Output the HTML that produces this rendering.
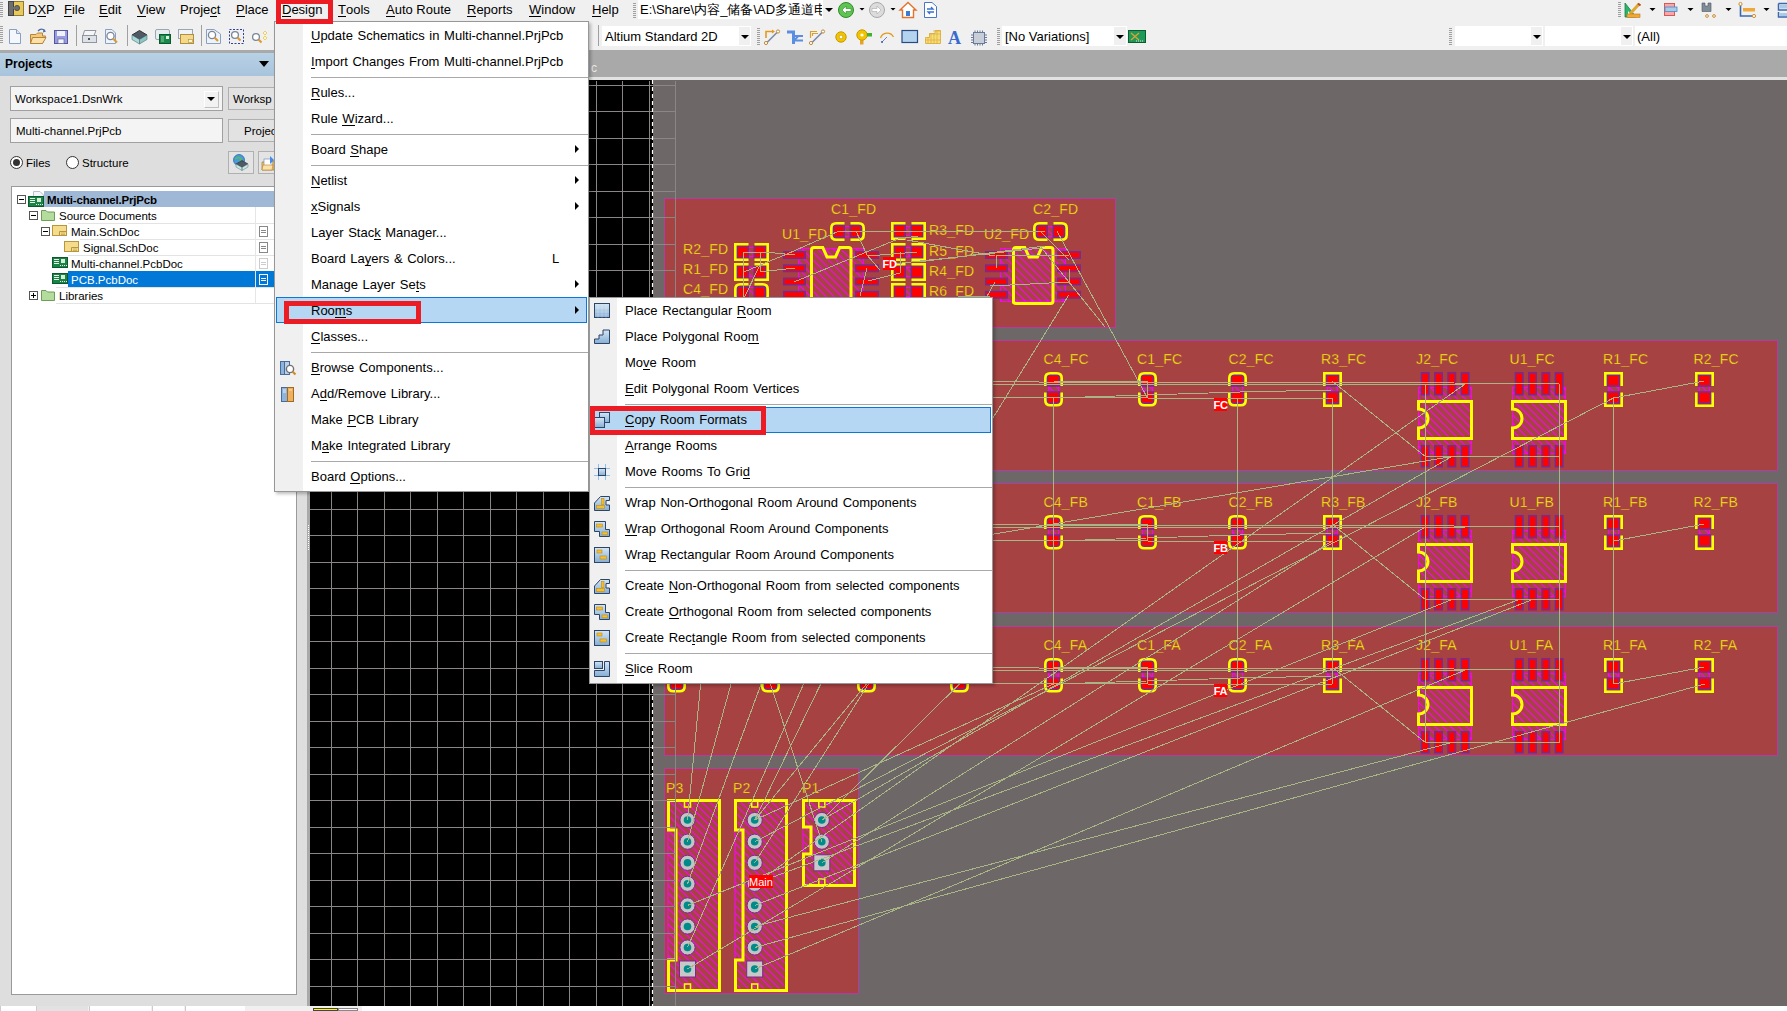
<!DOCTYPE html><html><head><meta charset="utf-8"><style>
*{margin:0;padding:0;box-sizing:border-box}
html,body{width:1787px;height:1011px;overflow:hidden;background:#f0f0f0;font-family:"Liberation Sans",sans-serif;font-size:13px;color:#000}
.a{position:absolute}
.t{position:absolute;white-space:nowrap;line-height:1}
u{text-decoration:none;border-bottom:1px solid #000;display:inline-block;line-height:0.92}
.menu{position:absolute;background:#fff;border:1px solid #979797;box-shadow:2px 2px 3px rgba(0,0,0,0.25)}
.gut{position:absolute;left:0;top:0;bottom:0;background:#f0f0f0}
.mi{position:absolute;left:0;right:0;height:26px}
.mi .l{position:absolute;top:6px;white-space:nowrap;line-height:1;word-spacing:1px}
.sep{position:absolute;height:1px;background:#a8a8a8}
.arr{position:absolute;width:0;height:0;border-top:4px solid transparent;border-bottom:4px solid transparent;border-left:4px solid #000}
.hl{position:absolute;background:#b5d7f3;border:1px solid #0a78d6}
.redbox{position:absolute;border:5px solid #ec1c24}
.combo{position:absolute;background:#fff}
.dd{position:absolute;width:0;height:0;border-left:4px solid transparent;border-right:4px solid transparent;border-top:4px solid #000}
</style></head><body>
<div class="a" style="left:0;top:0;width:1787px;height:24px;background:#f0f0f0"></div>
<div class="a" style="left:0;top:2px;width:3px;height:16px;background:repeating-linear-gradient(#a0a0a0 0 1px,transparent 1px 2px)"></div>
<div class="t" style="left:28px;top:3px">D<u>X</u>P</div>
<div class="t" style="left:64px;top:3px"><u>F</u>ile</div>
<div class="t" style="left:99px;top:3px"><u>E</u>dit</div>
<div class="t" style="left:137px;top:3px"><u>V</u>iew</div>
<div class="t" style="left:180px;top:3px">Proje<u>c</u>t</div>
<div class="t" style="left:236px;top:3px"><u>P</u>lace</div>
<div class="t" style="left:282px;top:3px"><u>D</u>esign</div>
<div class="t" style="left:338px;top:3px"><u>T</u>ools</div>
<div class="t" style="left:386px;top:3px"><u>A</u>uto Route</div>
<div class="t" style="left:467px;top:3px"><u>R</u>eports</div>
<div class="t" style="left:529px;top:3px"><u>W</u>indow</div>
<div class="t" style="left:592px;top:3px"><u>H</u>elp</div>
<div class="a" style="left:633px;top:3px;width:3px;height:16px;background:repeating-linear-gradient(#a0a0a0 0 1px,transparent 1px 2px)"></div>
<div class="combo" style="left:638px;top:0;width:196px;height:19px"></div>
<div class="t" style="left:640px;top:1px;font-size:13px;width:182px;height:18px;line-height:18px;overflow:hidden">E:\Share\内容_储备\AD多通道电路</div>
<div class="a" style="left:823px;top:0;width:11px;height:19px;background:#f0f0f0"></div>
<div class="dd" style="left:825px;top:8px"></div>
<div class="a" style="left:0;top:26px;width:3px;height:18px;background:repeating-linear-gradient(#a0a0a0 0 1px,transparent 1px 2px)"></div>
<div class="a" style="left:76px;top:25px;width:1px;height:21px;background:#a0a0a0"></div>
<div class="a" style="left:127px;top:25px;width:1px;height:21px;background:#a0a0a0"></div>
<div class="a" style="left:201px;top:25px;width:1px;height:21px;background:#a0a0a0"></div>
<div class="a" style="left:598px;top:25px;width:1px;height:21px;background:#a0a0a0"></div>
<div class="combo" style="left:602px;top:26px;width:149px;height:20px"></div>
<div class="t" style="left:605px;top:30px">Altium Standard 2D</div>
<div class="a" style="left:739px;top:27px;width:11px;height:18px;background:#f0f0f0"></div>
<div class="dd" style="left:741px;top:35px"></div>
<div class="a" style="left:757px;top:28px;width:3px;height:18px;background:repeating-linear-gradient(#a0a0a0 0 1px,transparent 1px 2px)"></div>
<div class="a" style="left:997px;top:28px;width:3px;height:18px;background:repeating-linear-gradient(#a0a0a0 0 1px,transparent 1px 2px)"></div>
<div class="combo" style="left:1002px;top:26px;width:125px;height:20px"></div>
<div class="t" style="left:1005px;top:30px">[No Variations]</div>
<div class="a" style="left:1114px;top:27px;width:12px;height:18px;background:#f0f0f0"></div>
<div class="dd" style="left:1116px;top:35px"></div>
<div class="a" style="left:1449px;top:28px;width:3px;height:18px;background:repeating-linear-gradient(#a0a0a0 0 1px,transparent 1px 2px)"></div>
<div class="combo" style="left:1455px;top:26px;width:88px;height:20px"></div>
<div class="a" style="left:1531px;top:27px;width:11px;height:18px;background:#f0f0f0"></div>
<div class="dd" style="left:1533px;top:35px"></div>
<div class="combo" style="left:1545px;top:26px;width:88px;height:20px"></div>
<div class="a" style="left:1621px;top:27px;width:11px;height:18px;background:#f0f0f0"></div>
<div class="dd" style="left:1623px;top:35px"></div>
<div class="combo" style="left:1635px;top:26px;width:152px;height:20px"></div>
<div class="t" style="left:1637px;top:30px">(All)</div>
<svg class="a" style="left:0;top:0" width="1787" height="50" viewBox="0 0 1787 50"><rect x="8.5" y="1.5" width="15" height="14" fill="#e8c95a" stroke="#8f7a35"/><rect x="8.5" y="1.5" width="5" height="14" fill="#6e6e6e" stroke="#444"/><circle cx="17" cy="8" r="2.6" fill="#6e6e6e" stroke="#444" stroke-width="0.8"/><rect x="13" y="7" width="3" height="2" fill="#6e6e6e"/><path d="M9.5,29.5 H16.5 L20.5,33.5 V43.5 H9.5 Z" fill="#f4f8fc" stroke="#8aa0c0"/><path d="M16.5,29.5 V33.5 H20.5" fill="#dde6f0" stroke="#8aa0c0"/><path d="M30.5,34.5 H36 L37.5,33 H42.5 V36 H45.5 L42.5,43.5 H30.5 Z" fill="#f4c97c" stroke="#b5853a"/><path d="M32.5,37.5 H46 L42.5,43.5 H30.5 Z" fill="#fbe0a8" stroke="#b5853a"/><path d="M38,31 Q41,27.5 45,30.5" fill="none" stroke="#4a6aa8" stroke-width="1.3"/><path d="M43.5,29 L46,31.5 L43,32.5 Z" fill="#4a6aa8"/><rect x="54.5" y="30.5" width="13" height="13" fill="#9a9ce0" stroke="#55579e"/><rect x="57" y="31" width="8" height="5" fill="#eef0fb"/><rect x="58" y="39" width="6" height="4.5" fill="#f4f4f4" stroke="#55579e" stroke-width="0.6"/><path d="M84.5,30.5 H96 L94,35.5 H83 Z" fill="#f6f6f6" stroke="#8f96a0"/><rect x="82.5" y="35.5" width="14" height="7" fill="#dde1e8" stroke="#8f96a0"/><rect x="88" y="38" width="2" height="2" fill="#555"/><path d="M105.5,29.5 H112 L115.5,33 V43.5 H105.5 Z" fill="#eef3fa" stroke="#8aa0c0"/><circle cx="110.5" cy="36" r="3.6" fill="#fff" stroke="#7b8595" stroke-width="1.3"/><path d="M113,38.5 L117,42.5" stroke="#d99a3a" stroke-width="2.2"/><path d="M132,35 L139.5,30.5 L147,35 L139.5,39.5 Z" fill="#4f5a66" stroke="#333"/><path d="M132,35 V39.5 L139.5,44 V39.5 Z" fill="#a8d8d8" stroke="#4a7070" stroke-width="0.6"/><path d="M147,35 V39.5 L139.5,44 V39.5 Z" fill="#8cc4c4" stroke="#4a7070" stroke-width="0.6"/><rect x="155.5" y="29.5" width="14" height="10" rx="1.5" fill="#e8edf2" stroke="#9aa6b2"/><rect x="159.5" y="34.5" width="11" height="9" fill="#17894a" stroke="#0b5a2e"/><rect x="166" y="36" width="3" height="3" fill="#e0f0e0"/><path d="M161,37 H164 M161,39 H164 M161,41 H164" stroke="#cfe8cf" stroke-width="0.7"/><rect x="178.5" y="29.5" width="14" height="9" fill="#f0f3f7" stroke="#9aa6b2"/><rect x="180.5" y="34.5" width="13" height="9" fill="#f4d98a" stroke="#b09040"/><rect x="188.5" y="39.5" width="4" height="3" fill="#fff3c8" stroke="#b09040" stroke-width="0.6"/><path d="M206.5,29.5 H214 L220.5,34 V43.5 H206.5 Z" fill="#eef3fa" stroke="#8aa0c0"/><circle cx="212" cy="35" r="3.6" fill="#fff" stroke="#7b8595" stroke-width="1.3"/><path d="M214.5,37.5 L218,41" stroke="#d99a3a" stroke-width="2.2"/><rect x="229.5" y="29.5" width="14" height="14" fill="none" stroke="#2c3f9a" stroke-dasharray="2,1.5"/><circle cx="235" cy="35" r="3.4" fill="#fff" stroke="#7b8595" stroke-width="1.3"/><path d="M237.5,37.5 L240.5,40.5" stroke="#d99a3a" stroke-width="2.2"/><circle cx="256" cy="37" r="3.4" fill="#fff" stroke="#7b8595" stroke-width="1.3"/><path d="M258.5,39.5 L261.5,42.5" stroke="#d99a3a" stroke-width="2.2"/><path d="M265,31 L267,33 L265,35 L263,33 Z M265,36 L267,38 L265,40 L263,38 Z" fill="#fff8c0" stroke="#e0c040" stroke-width="0.7"/><path d="M766,38 V31.5 H773" fill="none" stroke="#e39a1c" stroke-width="1.6"/><path d="M772,29.5 L775,31.5 L772,33.5 Z" fill="#e39a1c"/><path d="M766.5,43 L777.5,32" stroke="#7a8aa8" stroke-width="1.6"/><circle cx="766" cy="43" r="1.6" fill="#fff" stroke="#c08a3a" stroke-width="1"/><circle cx="778" cy="31.5" r="1.6" fill="#fff" stroke="#c08a3a" stroke-width="1"/><path d="M787,30.5 H795 V44 H792 V33.5 H787 Z" fill="#5a8ee0"/><path d="M795,36 H803 M795,39.5 L798,36.5 M795,40.5 H803" stroke="#5a8ee0" stroke-width="1.8" fill="none"/><path d="M810.5,38 V31.5 H817 M812.5,36 V33.5 H818" fill="none" stroke="#d9a030" stroke-width="1.2"/><path d="M811.5,43 L822.5,32" stroke="#7a8aa8" stroke-width="1.6"/><circle cx="811" cy="43" r="1.6" fill="#fff" stroke="#c08a3a"/><circle cx="823" cy="31.5" r="1.6" fill="#fff" stroke="#c08a3a"/><circle cx="841" cy="37" r="5.2" fill="#f2c400" stroke="#c89a00"/><circle cx="841" cy="37" r="1.8" fill="#fff" stroke="#aa8800" stroke-width="0.5"/><rect x="860" y="38" width="3.5" height="6.5" fill="#e8a030"/><circle cx="862" cy="35" r="5.2" fill="#f2c400" stroke="#c89a00"/><circle cx="862" cy="35" r="1.6" fill="#fff"/><rect x="867" y="33" width="5" height="3.5" fill="#44b030"/><path d="M880.5,38 A7,7 0 0 1 893.5,37" fill="none" stroke="#e39a1c" stroke-width="1.3"/><path d="M882,42 L887,37" stroke="#6a88c8" stroke-width="1"/><circle cx="882" cy="42" r="1" fill="#3a58a8"/><rect x="902" y="30.5" width="15.5" height="12" fill="#b4d3ef" stroke="#2a4a80" stroke-width="1.2"/><path d="M925.5,43.5 V37.5 H929.5 V33.5 H935 V30.5 H940.5 V43.5 Z" fill="#f7dc7a" stroke="#d8a830" stroke-width="0.8"/><path d="M925,40 H941 M928,37 V44 M931,34 V44 M934,34 V44 M937,31 V44 M929,34 H941 M933,31 H941" stroke="#d8a830" stroke-width="0.6"/><text x="948" y="44" font-family="Liberation Serif" font-weight="bold" font-size="18" fill="#3a6ad0">A</text><rect x="973.5" y="32.5" width="11" height="11" fill="#c8ced8" stroke="#6a7a9a"/><path d="M975,30.5 V32 M977.5,30.5 V32 M980,30.5 V32 M982.5,30.5 V32 M975,44 V45.5 M977.5,44 V45.5 M980,44 V45.5 M982.5,44 V45.5 M971,35 H973 M971,37.5 H973 M971,40 H973 M971,42.5 H973 M985,35 H987 M985,37.5 H987 M985,40 H987 M985,42.5 H987" stroke="#6a7a9a" stroke-width="1"/><rect x="1128.5" y="30.5" width="17" height="12" fill="#1d9a5a" stroke="#0d5a30"/><path d="M1131,33 L1139,40 M1139,33 L1131,40" stroke="#e0a030" stroke-width="1.3"/><path d="M1136,41 H1144" stroke="#e0f0e0" stroke-width="1" stroke-dasharray="1,1"/><circle cx="846" cy="10" r="7.5" fill="#5ec552" stroke="#2e8a2a"/><path d="M842,10 L846,6 V8.5 H851 V11.5 H846 V14 Z" fill="#fff" stroke="#2e8a2a" stroke-width="0.6"/><circle cx="877" cy="10" r="7.5" fill="#dcdcdc" stroke="#a8a8a8"/><path d="M881,10 L877,6 V8.5 H872 V11.5 H877 V14 Z" fill="#fff" stroke="#a8a8a8" stroke-width="0.6"/><path d="M900,10 L908,2.5 L916,10 H913.5 V17.5 H902.5 V10 Z" fill="#fff" stroke="#e2742e" stroke-width="1.4"/><rect x="906" y="11" width="4" height="5" fill="#3a7bd5"/><path d="M924.5,2.5 H932 L936.5,6.5 V17.5 H924.5 Z" fill="#fff" stroke="#4a78c0"/><path d="M927,9 H933 L931,7 M934,12 H928 L930,14" fill="none" stroke="#3a6fd0" stroke-width="1.3"/><path d="M1618,2.5 H1621 M1618,4.5 H1621 M1618,6.5 H1621 M1618,8.5 H1621 M1618,10.5 H1621 M1618,12.5 H1621 M1618,14.5 H1621 M1618,16.5 H1621" stroke="#a0a0a0" stroke-width="1"/><path d="M1625,3 V17 H1636 Z" fill="#2db36a" stroke="#16804a" stroke-width="0.8"/><path d="M1628,11 V14 H1631 Z" fill="#f0f0f0"/><path d="M1630,14 L1639,4" stroke="#e0a830" stroke-width="3"/><path d="M1638,3.5 L1640.5,5.5" stroke="#b05020" stroke-width="2"/><rect x="1627" y="14" width="13" height="3.5" fill="#f0a838" stroke="#c07818" stroke-width="0.6"/><rect x="1664.5" y="3.5" width="10" height="12" fill="#f8a8a8" stroke="#d85858"/><rect x="1665" y="7" width="12" height="4.5" fill="#a8cce8" stroke="#4a88c8" stroke-width="0.8"/><path d="M1702,3 H1705 V6 H1708 V3 H1711 V11.5 H1702 Z" fill="#7f8c98" stroke="#4a5560" stroke-width="0.6"/><circle cx="1707" cy="16" r="1.4" fill="none" stroke="#d09030"/><circle cx="1714" cy="16" r="1.4" fill="none" stroke="#d09030"/><path d="M1740.5,4 V16 H1754" fill="none" stroke="#3a68b0" stroke-width="1.6"/><circle cx="1740.5" cy="4" r="1.6" fill="#fff" stroke="#d09030"/><circle cx="1754" cy="16" r="1.6" fill="#fff" stroke="#d09030"/><rect x="1743" y="8" width="12" height="3.5" fill="#f0a838"/><path d="M1778.5,3.5 H1787 M1778.5,3.5 V10 H1787 M1778.5,12 V17 H1787" fill="none" stroke="#3a68b0" stroke-width="1.5"/><rect x="1780" y="5" width="7" height="3.5" fill="#a8cce8"/><rect x="1780" y="13" width="7" height="3" fill="#a8cce8"/><path d="M1649.5,8 H1655.5 L1652.5,11 Z" fill="#000"/><path d="M1687.5,8 H1693.5 L1690.5,11 Z" fill="#000"/><path d="M1725.5,8 H1731.5 L1728.5,11 Z" fill="#000"/><path d="M1763.5,8 H1769.5 L1766.5,11 Z" fill="#000"/><path d="M859.5,8 H864.5 L862,10.5 Z M890.5,8 H895.5 L893,10.5 Z" fill="#000"/></svg>
<div class="a" style="left:0;top:50px;width:310px;height:3px;background:#a9a9a9"></div>
<div class="a" style="left:0;top:53px;width:307px;height:953px;background:#dedede"></div>
<div class="a" style="left:0;top:53px;width:307px;height:23px;background:linear-gradient(#b7d1e6,#a8c4dc)"></div>
<div class="t" style="left:5px;top:58px;font-weight:bold;font-size:12px">Projects</div>
<div class="a" style="left:259px;top:61px;width:0;height:0;border-left:5px solid transparent;border-right:5px solid transparent;border-top:6px solid #000"></div>
<div class="a" style="left:307px;top:50px;width:3px;height:961px;background:#a9a9a9"></div>
<div class="a" style="left:308px;top:525px;width:1px;height:26px;background:repeating-linear-gradient(#fff 0 1px,transparent 1px 2px)"></div>
<div class="a" style="left:10px;top:86px;width:213px;height:25px;background:#f4f4f4;border:1px solid #a0a0a0"></div>
<div class="t" style="left:15px;top:94px;font-size:11.5px">Workspace1.DsnWrk</div>
<div class="a" style="left:204px;top:91px;width:15px;height:17px;background:#f2f2f2;border:1px solid;border-color:#fff #c0c0c0 #c0c0c0 #fff"></div>
<div class="dd" style="left:207px;top:97px"></div>
<div class="a" style="left:228px;top:87px;width:60px;height:23px;background:#e2e2e2;border:1px solid #b0b0b0"></div>
<div class="t" style="left:233px;top:94px;font-size:11.5px">Worksp</div>
<div class="a" style="left:10px;top:118px;width:213px;height:25px;background:#f4f4f4;border:1px solid #a0a0a0"></div>
<div class="t" style="left:16px;top:126px;font-size:11.5px">Multi-channel.PrjPcb</div>
<div class="a" style="left:228px;top:119px;width:60px;height:23px;background:#e2e2e2;border:1px solid #b0b0b0"></div>
<div class="t" style="left:244px;top:126px;font-size:11.5px">Projec</div>
<div class="a" style="left:10px;top:156px;width:13px;height:13px;border-radius:50%;background:#fff;border:1px solid #333"></div>
<div class="a" style="left:13px;top:159px;width:7px;height:7px;border-radius:50%;background:#333"></div>
<div class="t" style="left:26px;top:158px;font-size:11.5px">Files</div>
<div class="a" style="left:66px;top:156px;width:13px;height:13px;border-radius:50%;background:#fff;border:1px solid #333"></div>
<div class="t" style="left:82px;top:158px;font-size:11.5px">Structure</div>
<div class="a" style="left:228px;top:151px;width:26px;height:23px;background:#e4e4e4;border:1px solid #b0b0b0"></div>
<svg class="a" style="left:232px;top:154px" width="18" height="18" viewBox="0 0 18 18"><circle cx="7" cy="6" r="5.5" fill="#4a9ae0" stroke="#2a6ab0" stroke-width="0.8"/><path d="M3,5 Q6,2 9,5 Q7,8 10,9" fill="none" stroke="#5cc040" stroke-width="1.6"/><path d="M4,10 L10,6.5 L16,10 L10,13.5 Z" fill="#505a66" stroke="#2a2a2a" stroke-width="0.6"/><path d="M4,10 V13 L10,16.5 V13.5 Z M16,10 V13 L10,16.5 V13.5 Z" fill="#c8e8e8" stroke="#5a7a7a" stroke-width="0.5"/></svg>
<div class="a" style="left:258px;top:151px;width:26px;height:23px;background:#e4e4e4;border:1px solid #b0b0b0"></div>
<svg class="a" style="left:261px;top:154px" width="13" height="18" viewBox="0 0 13 18"><path d="M1,8 H6 L7,7 H13 V16 H1 Z" fill="#f3c77a" stroke="#b08030" stroke-width="0.8"/><rect x="3" y="5" width="8" height="7" fill="#fff" stroke="#6080b0" stroke-width="0.6"/><path d="M9,2 L13,6 L9,10 Z" fill="#4a8ae8"/><path d="M2,11 H12 L11,16 H1 Z" fill="#fbe0a8" stroke="#b08030" stroke-width="0.6"/></svg>
<div class="a" style="left:11px;top:186px;width:286px;height:809px;background:#fff;border:1px solid #9a9a9a"></div>
<div class="a" style="left:44px;top:191px;width:252px;height:16px;background:#9fb8d5"></div>
<div class="t" style="left:47px;top:195px;font-size:11.5px;font-weight:bold;color:#000;letter-spacing:-0.2px">Multi-channel.PrjPcb</div>
<div class="t" style="left:59px;top:211px;font-size:11.5px;font-weight:normal;color:#000;letter-spacing:0">Source Documents</div>
<div class="a" style="left:68px;top:223px;width:228px;height:1px;background:#e3e3e3"></div>
<div class="t" style="left:71px;top:227px;font-size:11.5px;font-weight:normal;color:#000;letter-spacing:0">Main.SchDoc</div>
<div class="a" style="left:80px;top:239px;width:216px;height:1px;background:#e3e3e3"></div>
<div class="t" style="left:83px;top:243px;font-size:11.5px;font-weight:normal;color:#000;letter-spacing:0">Signal.SchDoc</div>
<div class="a" style="left:68px;top:255px;width:228px;height:1px;background:#e3e3e3"></div>
<div class="t" style="left:71px;top:259px;font-size:11.5px;font-weight:normal;color:#000;letter-spacing:0">Multi-channel.PcbDoc</div>
<div class="a" style="left:68px;top:271px;width:228px;height:16px;background:#0078d7"></div>
<div class="t" style="left:71px;top:275px;font-size:11.5px;font-weight:normal;color:#fff;letter-spacing:0">PCB.PcbDoc</div>
<div class="a" style="left:56px;top:287px;width:240px;height:1px;background:#e3e3e3"></div>
<div class="a" style="left:56px;top:303px;width:240px;height:1px;background:#e3e3e3"></div>
<div class="t" style="left:59px;top:291px;font-size:11.5px;font-weight:normal;color:#000;letter-spacing:0">Libraries</div>
<div class="a" style="left:255px;top:207px;width:1px;height:96px;background:#e6e6e6"></div>
<div class="a" style="left:17px;top:195px;width:9px;height:9px;border:1px solid #555;background:#fff"></div>
<div class="a" style="left:19px;top:199px;width:5px;height:1px;background:#000"></div>
<div class="a" style="left:29px;top:211px;width:9px;height:9px;border:1px solid #555;background:#fff"></div>
<div class="a" style="left:31px;top:215px;width:5px;height:1px;background:#000"></div>
<div class="a" style="left:41px;top:227px;width:9px;height:9px;border:1px solid #555;background:#fff"></div>
<div class="a" style="left:43px;top:231px;width:5px;height:1px;background:#000"></div>
<div class="a" style="left:29px;top:291px;width:9px;height:9px;border:1px solid #555;background:#fff"></div>
<div class="a" style="left:31px;top:295px;width:5px;height:1px;background:#000"></div>
<div class="a" style="left:33px;top:293px;width:1px;height:5px;background:#000"></div>
<svg class="a" style="left:0;top:0" width="310" height="310" viewBox="0 0 310 310"><path d="M33.5,191.5 H40 L43.5,195 V204.5 H33.5 Z" fill="#f4f6fa" stroke="#b8c0cc"/><rect x="28.5" y="196.5" width="15" height="10" fill="#1a8448" stroke="#0c5a2c"/><path d="M30,198.5 H35 M30,200.5 H35 M30,202.5 H35" stroke="#e8f4e8" stroke-width="1"/><rect x="37" y="198" width="4" height="4" fill="#d8ecd8"/><path d="M36,204.5 h1 M38,204.5 h1 M40,204.5 h1 M42,204.5 h1" stroke="#e8f4e8" stroke-width="1"/><path d="M41.5,220.5 V210.5 H46 L47.5,212 H54.5 V220.5 Z" fill="#b4dc9c" stroke="#6f9a58"/><rect x="52.5" y="225.5" width="14" height="10" fill="#f5dc8c" stroke="#b8963c"/><path d="M59.5,235.5 V231.5 H66.5" fill="none" stroke="#b8963c"/><path d="M61,233 H65 M61,234.5 H65" stroke="#c8a850" stroke-width="0.8"/><rect x="64.5" y="241.5" width="14" height="10" fill="#f5dc8c" stroke="#b8963c"/><path d="M71.5,251.5 V247.5 H78.5" fill="none" stroke="#b8963c"/><path d="M73,249 H77 M73,250.5 H77" stroke="#c8a850" stroke-width="0.8"/><rect x="52.5" y="257.5" width="15" height="10" fill="#1a8448" stroke="#0c5a2c"/><path d="M54,259.5 H59 M54,261.5 H59 M54,263.5 H59" stroke="#e8f4e8" stroke-width="1"/><rect x="61" y="259" width="4" height="4" fill="#d8ecd8"/><path d="M60,265.5 h1 M62,265.5 h1 M64,265.5 h1 M66,265.5 h1" stroke="#e8f4e8" stroke-width="1"/><rect x="52.5" y="273.5" width="15" height="10" fill="#1a8448" stroke="#0c5a2c"/><path d="M54,275.5 H59 M54,277.5 H59 M54,279.5 H59" stroke="#e8f4e8" stroke-width="1"/><rect x="61" y="275" width="4" height="4" fill="#d8ecd8"/><path d="M60,281.5 h1 M62,281.5 h1 M64,281.5 h1 M66,281.5 h1" stroke="#e8f4e8" stroke-width="1"/><path d="M41.5,300.5 V290.5 H46 L47.5,292 H54.5 V300.5 Z" fill="#b4dc9c" stroke="#6f9a58"/></svg>
<div class="a" style="left:259px;top:226px;width:9px;height:11px;border:1px solid #888"></div>
<div class="a" style="left:261px;top:230px;width:5px;height:4px;background:repeating-linear-gradient(#888 0 1px,transparent 1px 2px)"></div>
<div class="a" style="left:259px;top:242px;width:9px;height:11px;border:1px solid #888"></div>
<div class="a" style="left:261px;top:246px;width:5px;height:4px;background:repeating-linear-gradient(#888 0 1px,transparent 1px 2px)"></div>
<div class="a" style="left:259px;top:258px;width:9px;height:11px;border:1px solid #ccc"></div>
<div class="a" style="left:261px;top:262px;width:5px;height:4px;background:repeating-linear-gradient(#ccc 0 1px,transparent 1px 2px)"></div>
<div class="a" style="left:259px;top:274px;width:9px;height:11px;border:1px solid #fff"></div>
<div class="a" style="left:261px;top:278px;width:5px;height:4px;background:repeating-linear-gradient(#fff 0 1px,transparent 1px 2px)"></div>
<div class="a" style="left:310px;top:50px;width:1477px;height:27px;background:#a9a9a9"></div>
<div class="a" style="left:310px;top:77px;width:1477px;height:3px;background:#e2e2e2"></div>
<div class="t" style="left:591px;top:62px;font-size:12px;color:#e8e8e8">c</div>
<div class="a" style="left:0;top:1006px;width:1787px;height:5px;background:#f0f0f0"></div>
<div class="a" style="left:0px;top:1006px;width:36px;height:5px;background:#fff;border-left:1px solid #ccc"></div>
<div class="a" style="left:36px;top:1006px;width:52px;height:5px;background:#e2e2e2;border-left:1px solid #ccc"></div>
<div class="a" style="left:89px;top:1006px;width:62px;height:5px;background:#fff;border-left:1px solid #ccc"></div>
<div class="a" style="left:152px;top:1006px;width:32px;height:5px;background:#fff;border-left:1px solid #ccc"></div>
<div class="a" style="left:185px;top:1006px;width:60px;height:5px;background:#fff;border-left:1px solid #ccc"></div>
<div class="a" style="left:313px;top:1008px;width:25px;height:3px;background:#ff0;border:1px solid #444"></div>
<div class="a" style="left:338px;top:1008px;width:20px;height:3px;background:#fff;border:1px solid #888"></div>
<div class="a" style="left:362px;top:1006px;width:1425px;height:5px;background:#fff"></div>
<svg class="a" style="left:0;top:0" width="1787" height="1011" viewBox="0 0 1787 1011"><rect x="310" y="80" width="1477" height="926" fill="#6d6867"/><rect x="310" y="80" width="343" height="926" fill="#000"/><rect x="664.5" y="198.5" width="451" height="129" fill="#a74242" stroke="#b23ca6" stroke-width="1"/><rect x="664.5" y="340.5" width="1113" height="130" fill="#a74242" stroke="#b23ca6" stroke-width="1"/><rect x="664.5" y="483.5" width="1113" height="129" fill="#a74242" stroke="#b23ca6" stroke-width="1"/><rect x="664.5" y="626.5" width="1113" height="129" fill="#a74242" stroke="#b23ca6" stroke-width="1"/><rect x="664.5" y="768.5" width="194" height="225" fill="#a74242" stroke="#b23ca6" stroke-width="1"/><defs><pattern id="hatch" patternUnits="userSpaceOnUse" width="5.5" height="5.5" patternTransform="rotate(-45)"><line x1="0.5" y1="0" x2="0.5" y2="5.5" stroke="#ff00ff" stroke-width="1"/></pattern></defs><text x="683" y="253.5" fill="#ffff00" stroke="#a74242" stroke-width="0.35" font-family="Liberation Sans" font-size="14" letter-spacing="0.2">R2_FD</text><text x="683" y="274" fill="#ffff00" stroke="#a74242" stroke-width="0.35" font-family="Liberation Sans" font-size="14" letter-spacing="0.2">R1_FD</text><text x="683" y="294" fill="#ffff00" stroke="#a74242" stroke-width="0.35" font-family="Liberation Sans" font-size="14" letter-spacing="0.2">C4_FD</text><rect x="747.5" y="247.5" width="7" height="9" fill="url(#hatch)" stroke="#ff00ff" stroke-width="1"/><rect x="737.1999999999999" y="246.20000000000002" width="11.000000000000023" height="11.600000000000017" fill="#ff0000" stroke="#7b2a8c" stroke-width="1.6"/><rect x="754.3" y="246.20000000000002" width="11.4" height="11.600000000000017" fill="#ff0000" stroke="#7b2a8c" stroke-width="1.6"/><path d="M748.5,244.3 H735.3 V259.7 H748.5 M754.5,244.3 H767.7 V259.7 H754.5" fill="none" stroke="#ffff00" stroke-width="2.6"/><rect x="747.5" y="267.5" width="7" height="9" fill="url(#hatch)" stroke="#ff00ff" stroke-width="1"/><rect x="737.1999999999999" y="266.2" width="11.000000000000023" height="11.600000000000046" fill="#ff0000" stroke="#7b2a8c" stroke-width="1.6"/><rect x="754.3" y="266.2" width="11.4" height="11.600000000000046" fill="#ff0000" stroke="#7b2a8c" stroke-width="1.6"/><path d="M748.5,264.3 H735.3 V279.7 H748.5 M754.5,264.3 H767.7 V279.7 H754.5" fill="none" stroke="#ffff00" stroke-width="2.6"/><rect x="747.5" y="287.5" width="7" height="10" fill="url(#hatch)" stroke="#ff00ff" stroke-width="1"/><rect x="737.8" y="286.8" width="10.4" height="11.4" fill="#ff0000" stroke="#7b2a8c" stroke-width="1.6"/><rect x="754.3" y="286.8" width="10.9" height="11.4" fill="#ff0000" stroke="#7b2a8c" stroke-width="1.6"/><path d="M748.5,284.3 H740.3 Q735.3,284.3 735.3,289.3 V295.7 Q735.3,300.7 740.3,300.7 H748.5 M754.5,284.3 H762.7 Q767.7,284.3 767.7,289.3 V295.7 Q767.7,300.7 762.7,300.7 H754.5" fill="none" stroke="#ffff00" stroke-width="2.6"/><rect x="798.5" y="248.5" width="65" height="53" fill="url(#hatch)" stroke="#ff00ff" stroke-width="1"/><rect x="783.8" y="251.8" width="21.4" height="6.4" fill="#ff0000" stroke="#7b2a8c" stroke-width="1.6"/><rect x="855.8" y="251.8" width="22.4" height="6.4" fill="#ff0000" stroke="#7b2a8c" stroke-width="1.6"/><rect x="783.8" y="265.05" width="21.4" height="6.4" fill="#ff0000" stroke="#7b2a8c" stroke-width="1.6"/><rect x="855.8" y="265.05" width="22.4" height="6.4" fill="#ff0000" stroke="#7b2a8c" stroke-width="1.6"/><rect x="783.8" y="278.3" width="21.4" height="6.4" fill="#ff0000" stroke="#7b2a8c" stroke-width="1.6"/><rect x="855.8" y="278.3" width="22.4" height="6.4" fill="#ff0000" stroke="#7b2a8c" stroke-width="1.6"/><rect x="783.8" y="291.55" width="21.4" height="6.4" fill="#ff0000" stroke="#7b2a8c" stroke-width="1.6"/><rect x="855.8" y="291.55" width="22.4" height="6.4" fill="#ff0000" stroke="#7b2a8c" stroke-width="1.6"/><path d="M811.5,303.5 V250 Q811.5,247.5 814.0,247.5 H822.75 L827.05,257 H835.45 L839.75,247.5 H848.5 Q851,247.5 851,250 V301 Q851,303.5 848.5,303.5 H814.0 Q811.5,303.5 811.5,301 Z" fill="none" stroke="#ffff00" stroke-width="3"/><rect x="843.5" y="226.5" width="7" height="10" fill="url(#hatch)" stroke="#ff00ff" stroke-width="1"/><rect x="833.8" y="225.8" width="10.4" height="11.4" fill="#ff0000" stroke="#7b2a8c" stroke-width="1.6"/><rect x="850.3" y="225.8" width="10.9" height="11.4" fill="#ff0000" stroke="#7b2a8c" stroke-width="1.6"/><path d="M844.5,223.3 H836.3 Q831.3,223.3 831.3,228.3 V234.7 Q831.3,239.7 836.3,239.7 H844.5 M850.5,223.3 H858.7 Q863.7,223.3 863.7,228.3 V234.7 Q863.7,239.7 858.7,239.7 H850.5" fill="none" stroke="#ffff00" stroke-width="2.6"/><text x="831" y="214" fill="#ffff00" stroke="#a74242" stroke-width="0.35" font-family="Liberation Sans" font-size="14" letter-spacing="0.2">C1_FD</text><text x="782" y="239" fill="#ffff00" stroke="#a74242" stroke-width="0.35" font-family="Liberation Sans" font-size="14" letter-spacing="0.2">U1_FD</text><rect x="904.5" y="226.5" width="7" height="9" fill="url(#hatch)" stroke="#ff00ff" stroke-width="1"/><rect x="894.1999999999999" y="225.20000000000002" width="11.000000000000023" height="11.599999999999989" fill="#ff0000" stroke="#7b2a8c" stroke-width="1.6"/><rect x="911.3" y="225.20000000000002" width="11.4" height="11.599999999999989" fill="#ff0000" stroke="#7b2a8c" stroke-width="1.6"/><path d="M905.5,223.3 H892.3 V238.7 H905.5 M911.5,223.3 H924.7 V238.7 H911.5" fill="none" stroke="#ffff00" stroke-width="2.6"/><rect x="904.5" y="247.5" width="7" height="9" fill="url(#hatch)" stroke="#ff00ff" stroke-width="1"/><rect x="894.1999999999999" y="246.20000000000002" width="11.000000000000023" height="11.600000000000017" fill="#ff0000" stroke="#7b2a8c" stroke-width="1.6"/><rect x="911.3" y="246.20000000000002" width="11.4" height="11.600000000000017" fill="#ff0000" stroke="#7b2a8c" stroke-width="1.6"/><path d="M905.5,244.3 H892.3 V259.7 H905.5 M911.5,244.3 H924.7 V259.7 H911.5" fill="none" stroke="#ffff00" stroke-width="2.6"/><rect x="904.5" y="267.5" width="7" height="9" fill="url(#hatch)" stroke="#ff00ff" stroke-width="1"/><rect x="894.1999999999999" y="266.2" width="11.000000000000023" height="11.600000000000046" fill="#ff0000" stroke="#7b2a8c" stroke-width="1.6"/><rect x="911.3" y="266.2" width="11.4" height="11.600000000000046" fill="#ff0000" stroke="#7b2a8c" stroke-width="1.6"/><path d="M905.5,264.3 H892.3 V279.7 H905.5 M911.5,264.3 H924.7 V279.7 H911.5" fill="none" stroke="#ffff00" stroke-width="2.6"/><rect x="904.5" y="287.5" width="7" height="9" fill="url(#hatch)" stroke="#ff00ff" stroke-width="1"/><rect x="894.1999999999999" y="286.2" width="11.000000000000023" height="11.600000000000046" fill="#ff0000" stroke="#7b2a8c" stroke-width="1.6"/><rect x="911.3" y="286.2" width="11.4" height="11.600000000000046" fill="#ff0000" stroke="#7b2a8c" stroke-width="1.6"/><path d="M905.5,284.3 H892.3 V299.7 H905.5 M911.5,284.3 H924.7 V299.7 H911.5" fill="none" stroke="#ffff00" stroke-width="2.6"/><text x="929" y="235" fill="#ffff00" stroke="#a74242" stroke-width="0.35" font-family="Liberation Sans" font-size="14" letter-spacing="0.2">R3_FD</text><text x="929" y="255.5" fill="#ffff00" stroke="#a74242" stroke-width="0.35" font-family="Liberation Sans" font-size="14" letter-spacing="0.2">R5_FD</text><text x="929" y="276" fill="#ffff00" stroke="#a74242" stroke-width="0.35" font-family="Liberation Sans" font-size="14" letter-spacing="0.2">R4_FD</text><text x="929" y="296" fill="#ffff00" stroke="#a74242" stroke-width="0.35" font-family="Liberation Sans" font-size="14" letter-spacing="0.2">R6_FD</text><rect x="1000.5" y="248.5" width="65" height="53" fill="url(#hatch)" stroke="#ff00ff" stroke-width="1"/><rect x="985.8" y="251.8" width="21.4" height="6.4" fill="#ff0000" stroke="#7b2a8c" stroke-width="1.6"/><rect x="1057.8" y="251.8" width="22.4" height="6.4" fill="#ff0000" stroke="#7b2a8c" stroke-width="1.6"/><rect x="985.8" y="265.05" width="21.4" height="6.4" fill="#ff0000" stroke="#7b2a8c" stroke-width="1.6"/><rect x="1057.8" y="265.05" width="22.4" height="6.4" fill="#ff0000" stroke="#7b2a8c" stroke-width="1.6"/><rect x="985.8" y="278.3" width="21.4" height="6.4" fill="#ff0000" stroke="#7b2a8c" stroke-width="1.6"/><rect x="1057.8" y="278.3" width="22.4" height="6.4" fill="#ff0000" stroke="#7b2a8c" stroke-width="1.6"/><rect x="985.8" y="291.55" width="21.4" height="6.4" fill="#ff0000" stroke="#7b2a8c" stroke-width="1.6"/><rect x="1057.8" y="291.55" width="22.4" height="6.4" fill="#ff0000" stroke="#7b2a8c" stroke-width="1.6"/><path d="M1013.5,303.5 V250 Q1013.5,247.5 1016.0,247.5 H1024.75 L1029.05,257 H1037.45 L1041.75,247.5 H1050.5 Q1053,247.5 1053,250 V301 Q1053,303.5 1050.5,303.5 H1016.0 Q1013.5,303.5 1013.5,301 Z" fill="none" stroke="#ffff00" stroke-width="3"/><rect x="1046.5" y="226.5" width="7" height="10" fill="url(#hatch)" stroke="#ff00ff" stroke-width="1"/><rect x="1036.8" y="225.8" width="10.4" height="11.4" fill="#ff0000" stroke="#7b2a8c" stroke-width="1.6"/><rect x="1053.3" y="225.8" width="10.9" height="11.4" fill="#ff0000" stroke="#7b2a8c" stroke-width="1.6"/><path d="M1047.5,223.3 H1039.3 Q1034.3,223.3 1034.3,228.3 V234.7 Q1034.3,239.7 1039.3,239.7 H1047.5 M1053.5,223.3 H1061.7 Q1066.7,223.3 1066.7,228.3 V234.7 Q1066.7,239.7 1061.7,239.7 H1053.5" fill="none" stroke="#ffff00" stroke-width="2.6"/><text x="984" y="239" fill="#ffff00" stroke="#a74242" stroke-width="0.35" font-family="Liberation Sans" font-size="14" letter-spacing="0.2">U2_FD</text><text x="1033" y="214" fill="#ffff00" stroke="#a74242" stroke-width="0.35" font-family="Liberation Sans" font-size="14" letter-spacing="0.2">C2_FD</text><rect x="671.5" y="385.5" width="10" height="6" fill="url(#hatch)" stroke="#ff00ff" stroke-width="1"/><rect x="670.5" y="375.2" width="11.99999999999991" height="10.800000000000034" fill="#ff0000" stroke="#7b2a8c" stroke-width="1.6"/><rect x="670.5" y="392.0" width="11.99999999999991" height="11.099999999999989" fill="#ff0000" stroke="#7b2a8c" stroke-width="1.6"/><path d="M668.3,386 V378.3 Q668.3,373.3 673.3,373.3 H679.7 Q684.7,373.3 684.7,378.3 V386 M668.3,392.5 V400.2 Q668.3,405.2 673.3,405.2 H679.7 Q684.7,405.2 684.7,400.2 V392.5" fill="none" stroke="#ffff00" stroke-width="2.6"/><rect x="765.5" y="385.5" width="10" height="6" fill="url(#hatch)" stroke="#ff00ff" stroke-width="1"/><rect x="764.5" y="375.2" width="11.99999999999991" height="10.800000000000034" fill="#ff0000" stroke="#7b2a8c" stroke-width="1.6"/><rect x="764.5" y="392.0" width="11.99999999999991" height="11.099999999999989" fill="#ff0000" stroke="#7b2a8c" stroke-width="1.6"/><path d="M762.3,386 V378.3 Q762.3,373.3 767.3,373.3 H773.7 Q778.7,373.3 778.7,378.3 V386 M762.3,392.5 V400.2 Q762.3,405.2 767.3,405.2 H773.7 Q778.7,405.2 778.7,400.2 V392.5" fill="none" stroke="#ffff00" stroke-width="2.6"/><rect x="861.5" y="385.5" width="10" height="6" fill="url(#hatch)" stroke="#ff00ff" stroke-width="1"/><rect x="860.5" y="375.2" width="11.99999999999991" height="10.800000000000034" fill="#ff0000" stroke="#7b2a8c" stroke-width="1.6"/><rect x="860.5" y="392.0" width="11.99999999999991" height="11.099999999999989" fill="#ff0000" stroke="#7b2a8c" stroke-width="1.6"/><path d="M858.3,386 V378.3 Q858.3,373.3 863.3,373.3 H869.7 Q874.7,373.3 874.7,378.3 V386 M858.3,392.5 V400.2 Q858.3,405.2 863.3,405.2 H869.7 Q874.7,405.2 874.7,400.2 V392.5" fill="none" stroke="#ffff00" stroke-width="2.6"/><rect x="954.5" y="385.5" width="10" height="6" fill="url(#hatch)" stroke="#ff00ff" stroke-width="1"/><rect x="953.5" y="375.2" width="11.99999999999991" height="10.800000000000034" fill="#ff0000" stroke="#7b2a8c" stroke-width="1.6"/><rect x="953.5" y="392.0" width="11.99999999999991" height="11.099999999999989" fill="#ff0000" stroke="#7b2a8c" stroke-width="1.6"/><path d="M951.3,386 V378.3 Q951.3,373.3 956.3,373.3 H962.7 Q967.7,373.3 967.7,378.3 V386 M951.3,392.5 V400.2 Q951.3,405.2 956.3,405.2 H962.7 Q967.7,405.2 967.7,400.2 V392.5" fill="none" stroke="#ffff00" stroke-width="2.6"/><rect x="1048.5" y="385.5" width="10" height="6" fill="url(#hatch)" stroke="#ff00ff" stroke-width="1"/><rect x="1047.5" y="375.2" width="11.99999999999991" height="10.800000000000034" fill="#ff0000" stroke="#7b2a8c" stroke-width="1.6"/><rect x="1047.5" y="392.0" width="11.99999999999991" height="11.099999999999989" fill="#ff0000" stroke="#7b2a8c" stroke-width="1.6"/><path d="M1045.3,386 V378.3 Q1045.3,373.3 1050.3,373.3 H1056.7 Q1061.7,373.3 1061.7,378.3 V386 M1045.3,392.5 V400.2 Q1045.3,405.2 1050.3,405.2 H1056.7 Q1061.7,405.2 1061.7,400.2 V392.5" fill="none" stroke="#ffff00" stroke-width="2.6"/><rect x="1142.5" y="385.5" width="10" height="6" fill="url(#hatch)" stroke="#ff00ff" stroke-width="1"/><rect x="1141.5" y="375.2" width="11.99999999999991" height="10.800000000000034" fill="#ff0000" stroke="#7b2a8c" stroke-width="1.6"/><rect x="1141.5" y="392.0" width="11.99999999999991" height="11.099999999999989" fill="#ff0000" stroke="#7b2a8c" stroke-width="1.6"/><path d="M1139.3,386 V378.3 Q1139.3,373.3 1144.3,373.3 H1150.7 Q1155.7,373.3 1155.7,378.3 V386 M1139.3,392.5 V400.2 Q1139.3,405.2 1144.3,405.2 H1150.7 Q1155.7,405.2 1155.7,400.2 V392.5" fill="none" stroke="#ffff00" stroke-width="2.6"/><rect x="1232.5" y="385.5" width="10" height="6" fill="url(#hatch)" stroke="#ff00ff" stroke-width="1"/><rect x="1231.5" y="375.2" width="11.99999999999991" height="10.800000000000034" fill="#ff0000" stroke="#7b2a8c" stroke-width="1.6"/><rect x="1231.5" y="392.0" width="11.99999999999991" height="11.099999999999989" fill="#ff0000" stroke="#7b2a8c" stroke-width="1.6"/><path d="M1229.3,386 V378.3 Q1229.3,373.3 1234.3,373.3 H1240.7 Q1245.7,373.3 1245.7,378.3 V386 M1229.3,392.5 V400.2 Q1229.3,405.2 1234.3,405.2 H1240.7 Q1245.7,405.2 1245.7,400.2 V392.5" fill="none" stroke="#ffff00" stroke-width="2.6"/><rect x="1327.5" y="385.5" width="10" height="6" fill="url(#hatch)" stroke="#ff00ff" stroke-width="1"/><rect x="1326.5" y="375.2" width="11.799999999999864" height="10.800000000000034" fill="#ff0000" stroke="#7b2a8c" stroke-width="1.6"/><rect x="1326.5" y="392.0" width="11.799999999999864" height="11.099999999999989" fill="#ff0000" stroke="#7b2a8c" stroke-width="1.6"/><path d="M1324.3,386 V373.3 H1340.7 V386 M1324.3,392.5 V405.7 H1340.7 V392.5" fill="none" stroke="#ffff00" stroke-width="2.6"/><rect x="1418.5" y="387.5" width="53" height="66" fill="url(#hatch)" stroke="#ff00ff" stroke-width="1"/><rect x="1421.5" y="372.8" width="7.4" height="21.9" fill="#ff0000" stroke="#7b2a8c" stroke-width="1.6"/><rect x="1421.5" y="445.8" width="7.4" height="20.9" fill="#ff0000" stroke="#7b2a8c" stroke-width="1.6"/><rect x="1434.8" y="372.8" width="7.4" height="21.9" fill="#ff0000" stroke="#7b2a8c" stroke-width="1.6"/><rect x="1434.8" y="445.8" width="7.4" height="20.9" fill="#ff0000" stroke="#7b2a8c" stroke-width="1.6"/><rect x="1448.1" y="372.8" width="7.4" height="21.9" fill="#ff0000" stroke="#7b2a8c" stroke-width="1.6"/><rect x="1448.1" y="445.8" width="7.4" height="20.9" fill="#ff0000" stroke="#7b2a8c" stroke-width="1.6"/><rect x="1461.4" y="372.8" width="7.4" height="21.9" fill="#ff0000" stroke="#7b2a8c" stroke-width="1.6"/><rect x="1461.4" y="445.8" width="7.4" height="20.9" fill="#ff0000" stroke="#7b2a8c" stroke-width="1.6"/><path d="M1418.5,401.5 H1471.5 V438.5 H1418.5 V428 A9,9 0 0 0 1418.5,409 Z" fill="none" stroke="#ffff00" stroke-width="3"/><rect x="1512.5" y="387.5" width="53" height="66" fill="url(#hatch)" stroke="#ff00ff" stroke-width="1"/><rect x="1515.5" y="372.8" width="7.4" height="21.9" fill="#ff0000" stroke="#7b2a8c" stroke-width="1.6"/><rect x="1515.5" y="445.8" width="7.4" height="20.9" fill="#ff0000" stroke="#7b2a8c" stroke-width="1.6"/><rect x="1528.8" y="372.8" width="7.4" height="21.9" fill="#ff0000" stroke="#7b2a8c" stroke-width="1.6"/><rect x="1528.8" y="445.8" width="7.4" height="20.9" fill="#ff0000" stroke="#7b2a8c" stroke-width="1.6"/><rect x="1542.1" y="372.8" width="7.4" height="21.9" fill="#ff0000" stroke="#7b2a8c" stroke-width="1.6"/><rect x="1542.1" y="445.8" width="7.4" height="20.9" fill="#ff0000" stroke="#7b2a8c" stroke-width="1.6"/><rect x="1555.4" y="372.8" width="7.4" height="21.9" fill="#ff0000" stroke="#7b2a8c" stroke-width="1.6"/><rect x="1555.4" y="445.8" width="7.4" height="20.9" fill="#ff0000" stroke="#7b2a8c" stroke-width="1.6"/><path d="M1512.5,401.5 H1565.5 V438.5 H1512.5 V428 A9,9 0 0 0 1512.5,409 Z" fill="none" stroke="#ffff00" stroke-width="3"/><rect x="1608.5" y="385.5" width="10" height="6" fill="url(#hatch)" stroke="#ff00ff" stroke-width="1"/><rect x="1607.5" y="375.2" width="11.799999999999864" height="10.800000000000034" fill="#ff0000" stroke="#7b2a8c" stroke-width="1.6"/><rect x="1607.5" y="392.0" width="11.799999999999864" height="11.099999999999989" fill="#ff0000" stroke="#7b2a8c" stroke-width="1.6"/><path d="M1605.3,386 V373.3 H1621.7 V386 M1605.3,392.5 V405.7 H1621.7 V392.5" fill="none" stroke="#ffff00" stroke-width="2.6"/><rect x="1699.5" y="385.5" width="10" height="6" fill="url(#hatch)" stroke="#ff00ff" stroke-width="1"/><rect x="1698.5" y="375.2" width="11.799999999999864" height="10.800000000000034" fill="#ff0000" stroke="#7b2a8c" stroke-width="1.6"/><rect x="1698.5" y="392.0" width="11.799999999999864" height="11.099999999999989" fill="#ff0000" stroke="#7b2a8c" stroke-width="1.6"/><path d="M1696.3,386 V373.3 H1712.7 V386 M1696.3,392.5 V405.7 H1712.7 V392.5" fill="none" stroke="#ffff00" stroke-width="2.6"/><text x="1043.5" y="364" fill="#ffff00" stroke="#a74242" stroke-width="0.35" font-family="Liberation Sans" font-size="14" letter-spacing="0.2">C4_FC</text><text x="1137" y="364" fill="#ffff00" stroke="#a74242" stroke-width="0.35" font-family="Liberation Sans" font-size="14" letter-spacing="0.2">C1_FC</text><text x="1228.5" y="364" fill="#ffff00" stroke="#a74242" stroke-width="0.35" font-family="Liberation Sans" font-size="14" letter-spacing="0.2">C2_FC</text><text x="1321" y="364" fill="#ffff00" stroke="#a74242" stroke-width="0.35" font-family="Liberation Sans" font-size="14" letter-spacing="0.2">R3_FC</text><text x="1416" y="364" fill="#ffff00" stroke="#a74242" stroke-width="0.35" font-family="Liberation Sans" font-size="14" letter-spacing="0.2">J2_FC</text><text x="1509.5" y="364" fill="#ffff00" stroke="#a74242" stroke-width="0.35" font-family="Liberation Sans" font-size="14" letter-spacing="0.2">U1_FC</text><text x="1603" y="364" fill="#ffff00" stroke="#a74242" stroke-width="0.35" font-family="Liberation Sans" font-size="14" letter-spacing="0.2">R1_FC</text><text x="1693.5" y="364" fill="#ffff00" stroke="#a74242" stroke-width="0.35" font-family="Liberation Sans" font-size="14" letter-spacing="0.2">R2_FC</text><rect x="671.5" y="528.5" width="10" height="6" fill="url(#hatch)" stroke="#ff00ff" stroke-width="1"/><rect x="670.5" y="518.1999999999999" width="11.99999999999991" height="10.799999999999978" fill="#ff0000" stroke="#7b2a8c" stroke-width="1.6"/><rect x="670.5" y="535.0" width="11.99999999999991" height="11.099999999999932" fill="#ff0000" stroke="#7b2a8c" stroke-width="1.6"/><path d="M668.3,529 V521.3 Q668.3,516.3 673.3,516.3 H679.7 Q684.7,516.3 684.7,521.3 V529 M668.3,535.5 V543.2 Q668.3,548.2 673.3,548.2 H679.7 Q684.7,548.2 684.7,543.2 V535.5" fill="none" stroke="#ffff00" stroke-width="2.6"/><rect x="765.5" y="528.5" width="10" height="6" fill="url(#hatch)" stroke="#ff00ff" stroke-width="1"/><rect x="764.5" y="518.1999999999999" width="11.99999999999991" height="10.799999999999978" fill="#ff0000" stroke="#7b2a8c" stroke-width="1.6"/><rect x="764.5" y="535.0" width="11.99999999999991" height="11.099999999999932" fill="#ff0000" stroke="#7b2a8c" stroke-width="1.6"/><path d="M762.3,529 V521.3 Q762.3,516.3 767.3,516.3 H773.7 Q778.7,516.3 778.7,521.3 V529 M762.3,535.5 V543.2 Q762.3,548.2 767.3,548.2 H773.7 Q778.7,548.2 778.7,543.2 V535.5" fill="none" stroke="#ffff00" stroke-width="2.6"/><rect x="861.5" y="528.5" width="10" height="6" fill="url(#hatch)" stroke="#ff00ff" stroke-width="1"/><rect x="860.5" y="518.1999999999999" width="11.99999999999991" height="10.799999999999978" fill="#ff0000" stroke="#7b2a8c" stroke-width="1.6"/><rect x="860.5" y="535.0" width="11.99999999999991" height="11.099999999999932" fill="#ff0000" stroke="#7b2a8c" stroke-width="1.6"/><path d="M858.3,529 V521.3 Q858.3,516.3 863.3,516.3 H869.7 Q874.7,516.3 874.7,521.3 V529 M858.3,535.5 V543.2 Q858.3,548.2 863.3,548.2 H869.7 Q874.7,548.2 874.7,543.2 V535.5" fill="none" stroke="#ffff00" stroke-width="2.6"/><rect x="954.5" y="528.5" width="10" height="6" fill="url(#hatch)" stroke="#ff00ff" stroke-width="1"/><rect x="953.5" y="518.1999999999999" width="11.99999999999991" height="10.799999999999978" fill="#ff0000" stroke="#7b2a8c" stroke-width="1.6"/><rect x="953.5" y="535.0" width="11.99999999999991" height="11.099999999999932" fill="#ff0000" stroke="#7b2a8c" stroke-width="1.6"/><path d="M951.3,529 V521.3 Q951.3,516.3 956.3,516.3 H962.7 Q967.7,516.3 967.7,521.3 V529 M951.3,535.5 V543.2 Q951.3,548.2 956.3,548.2 H962.7 Q967.7,548.2 967.7,543.2 V535.5" fill="none" stroke="#ffff00" stroke-width="2.6"/><rect x="1048.5" y="528.5" width="10" height="6" fill="url(#hatch)" stroke="#ff00ff" stroke-width="1"/><rect x="1047.5" y="518.1999999999999" width="11.99999999999991" height="10.799999999999978" fill="#ff0000" stroke="#7b2a8c" stroke-width="1.6"/><rect x="1047.5" y="535.0" width="11.99999999999991" height="11.099999999999932" fill="#ff0000" stroke="#7b2a8c" stroke-width="1.6"/><path d="M1045.3,529 V521.3 Q1045.3,516.3 1050.3,516.3 H1056.7 Q1061.7,516.3 1061.7,521.3 V529 M1045.3,535.5 V543.2 Q1045.3,548.2 1050.3,548.2 H1056.7 Q1061.7,548.2 1061.7,543.2 V535.5" fill="none" stroke="#ffff00" stroke-width="2.6"/><rect x="1142.5" y="528.5" width="10" height="6" fill="url(#hatch)" stroke="#ff00ff" stroke-width="1"/><rect x="1141.5" y="518.1999999999999" width="11.99999999999991" height="10.799999999999978" fill="#ff0000" stroke="#7b2a8c" stroke-width="1.6"/><rect x="1141.5" y="535.0" width="11.99999999999991" height="11.099999999999932" fill="#ff0000" stroke="#7b2a8c" stroke-width="1.6"/><path d="M1139.3,529 V521.3 Q1139.3,516.3 1144.3,516.3 H1150.7 Q1155.7,516.3 1155.7,521.3 V529 M1139.3,535.5 V543.2 Q1139.3,548.2 1144.3,548.2 H1150.7 Q1155.7,548.2 1155.7,543.2 V535.5" fill="none" stroke="#ffff00" stroke-width="2.6"/><rect x="1232.5" y="528.5" width="10" height="6" fill="url(#hatch)" stroke="#ff00ff" stroke-width="1"/><rect x="1231.5" y="518.1999999999999" width="11.99999999999991" height="10.799999999999978" fill="#ff0000" stroke="#7b2a8c" stroke-width="1.6"/><rect x="1231.5" y="535.0" width="11.99999999999991" height="11.099999999999932" fill="#ff0000" stroke="#7b2a8c" stroke-width="1.6"/><path d="M1229.3,529 V521.3 Q1229.3,516.3 1234.3,516.3 H1240.7 Q1245.7,516.3 1245.7,521.3 V529 M1229.3,535.5 V543.2 Q1229.3,548.2 1234.3,548.2 H1240.7 Q1245.7,548.2 1245.7,543.2 V535.5" fill="none" stroke="#ffff00" stroke-width="2.6"/><rect x="1327.5" y="528.5" width="10" height="6" fill="url(#hatch)" stroke="#ff00ff" stroke-width="1"/><rect x="1326.5" y="518.1999999999999" width="11.799999999999864" height="10.799999999999978" fill="#ff0000" stroke="#7b2a8c" stroke-width="1.6"/><rect x="1326.5" y="535.0" width="11.799999999999864" height="11.099999999999932" fill="#ff0000" stroke="#7b2a8c" stroke-width="1.6"/><path d="M1324.3,529 V516.3 H1340.7 V529 M1324.3,535.5 V548.7 H1340.7 V535.5" fill="none" stroke="#ffff00" stroke-width="2.6"/><rect x="1418.5" y="530.5" width="53" height="66" fill="url(#hatch)" stroke="#ff00ff" stroke-width="1"/><rect x="1421.5" y="515.8" width="7.4" height="21.9" fill="#ff0000" stroke="#7b2a8c" stroke-width="1.6"/><rect x="1421.5" y="588.8" width="7.4" height="20.9" fill="#ff0000" stroke="#7b2a8c" stroke-width="1.6"/><rect x="1434.8" y="515.8" width="7.4" height="21.9" fill="#ff0000" stroke="#7b2a8c" stroke-width="1.6"/><rect x="1434.8" y="588.8" width="7.4" height="20.9" fill="#ff0000" stroke="#7b2a8c" stroke-width="1.6"/><rect x="1448.1" y="515.8" width="7.4" height="21.9" fill="#ff0000" stroke="#7b2a8c" stroke-width="1.6"/><rect x="1448.1" y="588.8" width="7.4" height="20.9" fill="#ff0000" stroke="#7b2a8c" stroke-width="1.6"/><rect x="1461.4" y="515.8" width="7.4" height="21.9" fill="#ff0000" stroke="#7b2a8c" stroke-width="1.6"/><rect x="1461.4" y="588.8" width="7.4" height="20.9" fill="#ff0000" stroke="#7b2a8c" stroke-width="1.6"/><path d="M1418.5,544.5 H1471.5 V581.5 H1418.5 V571 A9,9 0 0 0 1418.5,552 Z" fill="none" stroke="#ffff00" stroke-width="3"/><rect x="1512.5" y="530.5" width="53" height="66" fill="url(#hatch)" stroke="#ff00ff" stroke-width="1"/><rect x="1515.5" y="515.8" width="7.4" height="21.9" fill="#ff0000" stroke="#7b2a8c" stroke-width="1.6"/><rect x="1515.5" y="588.8" width="7.4" height="20.9" fill="#ff0000" stroke="#7b2a8c" stroke-width="1.6"/><rect x="1528.8" y="515.8" width="7.4" height="21.9" fill="#ff0000" stroke="#7b2a8c" stroke-width="1.6"/><rect x="1528.8" y="588.8" width="7.4" height="20.9" fill="#ff0000" stroke="#7b2a8c" stroke-width="1.6"/><rect x="1542.1" y="515.8" width="7.4" height="21.9" fill="#ff0000" stroke="#7b2a8c" stroke-width="1.6"/><rect x="1542.1" y="588.8" width="7.4" height="20.9" fill="#ff0000" stroke="#7b2a8c" stroke-width="1.6"/><rect x="1555.4" y="515.8" width="7.4" height="21.9" fill="#ff0000" stroke="#7b2a8c" stroke-width="1.6"/><rect x="1555.4" y="588.8" width="7.4" height="20.9" fill="#ff0000" stroke="#7b2a8c" stroke-width="1.6"/><path d="M1512.5,544.5 H1565.5 V581.5 H1512.5 V571 A9,9 0 0 0 1512.5,552 Z" fill="none" stroke="#ffff00" stroke-width="3"/><rect x="1608.5" y="528.5" width="10" height="6" fill="url(#hatch)" stroke="#ff00ff" stroke-width="1"/><rect x="1607.5" y="518.1999999999999" width="11.799999999999864" height="10.799999999999978" fill="#ff0000" stroke="#7b2a8c" stroke-width="1.6"/><rect x="1607.5" y="535.0" width="11.799999999999864" height="11.099999999999932" fill="#ff0000" stroke="#7b2a8c" stroke-width="1.6"/><path d="M1605.3,529 V516.3 H1621.7 V529 M1605.3,535.5 V548.7 H1621.7 V535.5" fill="none" stroke="#ffff00" stroke-width="2.6"/><rect x="1699.5" y="528.5" width="10" height="6" fill="url(#hatch)" stroke="#ff00ff" stroke-width="1"/><rect x="1698.5" y="518.1999999999999" width="11.799999999999864" height="10.799999999999978" fill="#ff0000" stroke="#7b2a8c" stroke-width="1.6"/><rect x="1698.5" y="535.0" width="11.799999999999864" height="11.099999999999932" fill="#ff0000" stroke="#7b2a8c" stroke-width="1.6"/><path d="M1696.3,529 V516.3 H1712.7 V529 M1696.3,535.5 V548.7 H1712.7 V535.5" fill="none" stroke="#ffff00" stroke-width="2.6"/><text x="1043.5" y="507" fill="#ffff00" stroke="#a74242" stroke-width="0.35" font-family="Liberation Sans" font-size="14" letter-spacing="0.2">C4_FB</text><text x="1137" y="507" fill="#ffff00" stroke="#a74242" stroke-width="0.35" font-family="Liberation Sans" font-size="14" letter-spacing="0.2">C1_FB</text><text x="1228.5" y="507" fill="#ffff00" stroke="#a74242" stroke-width="0.35" font-family="Liberation Sans" font-size="14" letter-spacing="0.2">C2_FB</text><text x="1321" y="507" fill="#ffff00" stroke="#a74242" stroke-width="0.35" font-family="Liberation Sans" font-size="14" letter-spacing="0.2">R3_FB</text><text x="1416" y="507" fill="#ffff00" stroke="#a74242" stroke-width="0.35" font-family="Liberation Sans" font-size="14" letter-spacing="0.2">J2_FB</text><text x="1509.5" y="507" fill="#ffff00" stroke="#a74242" stroke-width="0.35" font-family="Liberation Sans" font-size="14" letter-spacing="0.2">U1_FB</text><text x="1603" y="507" fill="#ffff00" stroke="#a74242" stroke-width="0.35" font-family="Liberation Sans" font-size="14" letter-spacing="0.2">R1_FB</text><text x="1693.5" y="507" fill="#ffff00" stroke="#a74242" stroke-width="0.35" font-family="Liberation Sans" font-size="14" letter-spacing="0.2">R2_FB</text><rect x="671.5" y="671.5" width="10" height="6" fill="url(#hatch)" stroke="#ff00ff" stroke-width="1"/><rect x="670.5" y="661.1999999999999" width="11.99999999999991" height="10.799999999999978" fill="#ff0000" stroke="#7b2a8c" stroke-width="1.6"/><rect x="670.5" y="678.0" width="11.99999999999991" height="11.099999999999932" fill="#ff0000" stroke="#7b2a8c" stroke-width="1.6"/><path d="M668.3,672 V664.3 Q668.3,659.3 673.3,659.3 H679.7 Q684.7,659.3 684.7,664.3 V672 M668.3,678.5 V686.2 Q668.3,691.2 673.3,691.2 H679.7 Q684.7,691.2 684.7,686.2 V678.5" fill="none" stroke="#ffff00" stroke-width="2.6"/><rect x="765.5" y="671.5" width="10" height="6" fill="url(#hatch)" stroke="#ff00ff" stroke-width="1"/><rect x="764.5" y="661.1999999999999" width="11.99999999999991" height="10.799999999999978" fill="#ff0000" stroke="#7b2a8c" stroke-width="1.6"/><rect x="764.5" y="678.0" width="11.99999999999991" height="11.099999999999932" fill="#ff0000" stroke="#7b2a8c" stroke-width="1.6"/><path d="M762.3,672 V664.3 Q762.3,659.3 767.3,659.3 H773.7 Q778.7,659.3 778.7,664.3 V672 M762.3,678.5 V686.2 Q762.3,691.2 767.3,691.2 H773.7 Q778.7,691.2 778.7,686.2 V678.5" fill="none" stroke="#ffff00" stroke-width="2.6"/><rect x="861.5" y="671.5" width="10" height="6" fill="url(#hatch)" stroke="#ff00ff" stroke-width="1"/><rect x="860.5" y="661.1999999999999" width="11.99999999999991" height="10.799999999999978" fill="#ff0000" stroke="#7b2a8c" stroke-width="1.6"/><rect x="860.5" y="678.0" width="11.99999999999991" height="11.099999999999932" fill="#ff0000" stroke="#7b2a8c" stroke-width="1.6"/><path d="M858.3,672 V664.3 Q858.3,659.3 863.3,659.3 H869.7 Q874.7,659.3 874.7,664.3 V672 M858.3,678.5 V686.2 Q858.3,691.2 863.3,691.2 H869.7 Q874.7,691.2 874.7,686.2 V678.5" fill="none" stroke="#ffff00" stroke-width="2.6"/><rect x="954.5" y="671.5" width="10" height="6" fill="url(#hatch)" stroke="#ff00ff" stroke-width="1"/><rect x="953.5" y="661.1999999999999" width="11.99999999999991" height="10.799999999999978" fill="#ff0000" stroke="#7b2a8c" stroke-width="1.6"/><rect x="953.5" y="678.0" width="11.99999999999991" height="11.099999999999932" fill="#ff0000" stroke="#7b2a8c" stroke-width="1.6"/><path d="M951.3,672 V664.3 Q951.3,659.3 956.3,659.3 H962.7 Q967.7,659.3 967.7,664.3 V672 M951.3,678.5 V686.2 Q951.3,691.2 956.3,691.2 H962.7 Q967.7,691.2 967.7,686.2 V678.5" fill="none" stroke="#ffff00" stroke-width="2.6"/><rect x="1048.5" y="671.5" width="10" height="6" fill="url(#hatch)" stroke="#ff00ff" stroke-width="1"/><rect x="1047.5" y="661.1999999999999" width="11.99999999999991" height="10.799999999999978" fill="#ff0000" stroke="#7b2a8c" stroke-width="1.6"/><rect x="1047.5" y="678.0" width="11.99999999999991" height="11.099999999999932" fill="#ff0000" stroke="#7b2a8c" stroke-width="1.6"/><path d="M1045.3,672 V664.3 Q1045.3,659.3 1050.3,659.3 H1056.7 Q1061.7,659.3 1061.7,664.3 V672 M1045.3,678.5 V686.2 Q1045.3,691.2 1050.3,691.2 H1056.7 Q1061.7,691.2 1061.7,686.2 V678.5" fill="none" stroke="#ffff00" stroke-width="2.6"/><rect x="1142.5" y="671.5" width="10" height="6" fill="url(#hatch)" stroke="#ff00ff" stroke-width="1"/><rect x="1141.5" y="661.1999999999999" width="11.99999999999991" height="10.799999999999978" fill="#ff0000" stroke="#7b2a8c" stroke-width="1.6"/><rect x="1141.5" y="678.0" width="11.99999999999991" height="11.099999999999932" fill="#ff0000" stroke="#7b2a8c" stroke-width="1.6"/><path d="M1139.3,672 V664.3 Q1139.3,659.3 1144.3,659.3 H1150.7 Q1155.7,659.3 1155.7,664.3 V672 M1139.3,678.5 V686.2 Q1139.3,691.2 1144.3,691.2 H1150.7 Q1155.7,691.2 1155.7,686.2 V678.5" fill="none" stroke="#ffff00" stroke-width="2.6"/><rect x="1232.5" y="671.5" width="10" height="6" fill="url(#hatch)" stroke="#ff00ff" stroke-width="1"/><rect x="1231.5" y="661.1999999999999" width="11.99999999999991" height="10.799999999999978" fill="#ff0000" stroke="#7b2a8c" stroke-width="1.6"/><rect x="1231.5" y="678.0" width="11.99999999999991" height="11.099999999999932" fill="#ff0000" stroke="#7b2a8c" stroke-width="1.6"/><path d="M1229.3,672 V664.3 Q1229.3,659.3 1234.3,659.3 H1240.7 Q1245.7,659.3 1245.7,664.3 V672 M1229.3,678.5 V686.2 Q1229.3,691.2 1234.3,691.2 H1240.7 Q1245.7,691.2 1245.7,686.2 V678.5" fill="none" stroke="#ffff00" stroke-width="2.6"/><rect x="1327.5" y="671.5" width="10" height="6" fill="url(#hatch)" stroke="#ff00ff" stroke-width="1"/><rect x="1326.5" y="661.1999999999999" width="11.799999999999864" height="10.799999999999978" fill="#ff0000" stroke="#7b2a8c" stroke-width="1.6"/><rect x="1326.5" y="678.0" width="11.799999999999864" height="11.099999999999932" fill="#ff0000" stroke="#7b2a8c" stroke-width="1.6"/><path d="M1324.3,672 V659.3 H1340.7 V672 M1324.3,678.5 V691.7 H1340.7 V678.5" fill="none" stroke="#ffff00" stroke-width="2.6"/><rect x="1418.5" y="673.5" width="53" height="66" fill="url(#hatch)" stroke="#ff00ff" stroke-width="1"/><rect x="1421.5" y="658.8" width="7.4" height="21.9" fill="#ff0000" stroke="#7b2a8c" stroke-width="1.6"/><rect x="1421.5" y="731.8" width="7.4" height="20.9" fill="#ff0000" stroke="#7b2a8c" stroke-width="1.6"/><rect x="1434.8" y="658.8" width="7.4" height="21.9" fill="#ff0000" stroke="#7b2a8c" stroke-width="1.6"/><rect x="1434.8" y="731.8" width="7.4" height="20.9" fill="#ff0000" stroke="#7b2a8c" stroke-width="1.6"/><rect x="1448.1" y="658.8" width="7.4" height="21.9" fill="#ff0000" stroke="#7b2a8c" stroke-width="1.6"/><rect x="1448.1" y="731.8" width="7.4" height="20.9" fill="#ff0000" stroke="#7b2a8c" stroke-width="1.6"/><rect x="1461.4" y="658.8" width="7.4" height="21.9" fill="#ff0000" stroke="#7b2a8c" stroke-width="1.6"/><rect x="1461.4" y="731.8" width="7.4" height="20.9" fill="#ff0000" stroke="#7b2a8c" stroke-width="1.6"/><path d="M1418.5,687.5 H1471.5 V724.5 H1418.5 V714 A9,9 0 0 0 1418.5,695 Z" fill="none" stroke="#ffff00" stroke-width="3"/><rect x="1512.5" y="673.5" width="53" height="66" fill="url(#hatch)" stroke="#ff00ff" stroke-width="1"/><rect x="1515.5" y="658.8" width="7.4" height="21.9" fill="#ff0000" stroke="#7b2a8c" stroke-width="1.6"/><rect x="1515.5" y="731.8" width="7.4" height="20.9" fill="#ff0000" stroke="#7b2a8c" stroke-width="1.6"/><rect x="1528.8" y="658.8" width="7.4" height="21.9" fill="#ff0000" stroke="#7b2a8c" stroke-width="1.6"/><rect x="1528.8" y="731.8" width="7.4" height="20.9" fill="#ff0000" stroke="#7b2a8c" stroke-width="1.6"/><rect x="1542.1" y="658.8" width="7.4" height="21.9" fill="#ff0000" stroke="#7b2a8c" stroke-width="1.6"/><rect x="1542.1" y="731.8" width="7.4" height="20.9" fill="#ff0000" stroke="#7b2a8c" stroke-width="1.6"/><rect x="1555.4" y="658.8" width="7.4" height="21.9" fill="#ff0000" stroke="#7b2a8c" stroke-width="1.6"/><rect x="1555.4" y="731.8" width="7.4" height="20.9" fill="#ff0000" stroke="#7b2a8c" stroke-width="1.6"/><path d="M1512.5,687.5 H1565.5 V724.5 H1512.5 V714 A9,9 0 0 0 1512.5,695 Z" fill="none" stroke="#ffff00" stroke-width="3"/><rect x="1608.5" y="671.5" width="10" height="6" fill="url(#hatch)" stroke="#ff00ff" stroke-width="1"/><rect x="1607.5" y="661.1999999999999" width="11.799999999999864" height="10.799999999999978" fill="#ff0000" stroke="#7b2a8c" stroke-width="1.6"/><rect x="1607.5" y="678.0" width="11.799999999999864" height="11.099999999999932" fill="#ff0000" stroke="#7b2a8c" stroke-width="1.6"/><path d="M1605.3,672 V659.3 H1621.7 V672 M1605.3,678.5 V691.7 H1621.7 V678.5" fill="none" stroke="#ffff00" stroke-width="2.6"/><rect x="1699.5" y="671.5" width="10" height="6" fill="url(#hatch)" stroke="#ff00ff" stroke-width="1"/><rect x="1698.5" y="661.1999999999999" width="11.799999999999864" height="10.799999999999978" fill="#ff0000" stroke="#7b2a8c" stroke-width="1.6"/><rect x="1698.5" y="678.0" width="11.799999999999864" height="11.099999999999932" fill="#ff0000" stroke="#7b2a8c" stroke-width="1.6"/><path d="M1696.3,672 V659.3 H1712.7 V672 M1696.3,678.5 V691.7 H1712.7 V678.5" fill="none" stroke="#ffff00" stroke-width="2.6"/><text x="1043.5" y="650" fill="#ffff00" stroke="#a74242" stroke-width="0.35" font-family="Liberation Sans" font-size="14" letter-spacing="0.2">C4_FA</text><text x="1137" y="650" fill="#ffff00" stroke="#a74242" stroke-width="0.35" font-family="Liberation Sans" font-size="14" letter-spacing="0.2">C1_FA</text><text x="1228.5" y="650" fill="#ffff00" stroke="#a74242" stroke-width="0.35" font-family="Liberation Sans" font-size="14" letter-spacing="0.2">C2_FA</text><text x="1321" y="650" fill="#ffff00" stroke="#a74242" stroke-width="0.35" font-family="Liberation Sans" font-size="14" letter-spacing="0.2">R3_FA</text><text x="1416" y="650" fill="#ffff00" stroke="#a74242" stroke-width="0.35" font-family="Liberation Sans" font-size="14" letter-spacing="0.2">J2_FA</text><text x="1509.5" y="650" fill="#ffff00" stroke="#a74242" stroke-width="0.35" font-family="Liberation Sans" font-size="14" letter-spacing="0.2">U1_FA</text><text x="1603" y="650" fill="#ffff00" stroke="#a74242" stroke-width="0.35" font-family="Liberation Sans" font-size="14" letter-spacing="0.2">R1_FA</text><text x="1693.5" y="650" fill="#ffff00" stroke="#a74242" stroke-width="0.35" font-family="Liberation Sans" font-size="14" letter-spacing="0.2">R2_FA</text><rect x="668" y="800" width="52" height="191" fill="url(#hatch)" stroke="#ff00ff" stroke-width="1"/><path d="M668.5,800.5 H719.5 V990.5 H668.5 V960 H676 V830 H668.5 Z" fill="none" stroke="#ffff00" stroke-width="3"/><rect x="684.5" y="801" width="6" height="6" fill="none" stroke="#ffff00" stroke-width="1.5"/><rect x="684.5" y="984" width="6" height="6" fill="none" stroke="#ffff00" stroke-width="1.5"/><circle cx="687.5" cy="820" r="7.6" fill="#c4c4c4" stroke="#7b2a8c" stroke-width="1"/><circle cx="687.5" cy="820" r="3.8" fill="#008b8b"/><circle cx="687.5" cy="841.7" r="7.6" fill="#c4c4c4" stroke="#7b2a8c" stroke-width="1"/><circle cx="687.5" cy="841.7" r="3.8" fill="#008b8b"/><circle cx="687.5" cy="862.8" r="7.6" fill="#c4c4c4" stroke="#7b2a8c" stroke-width="1"/><circle cx="687.5" cy="862.8" r="3.8" fill="#008b8b"/><circle cx="687.5" cy="883.8" r="7.6" fill="#c4c4c4" stroke="#7b2a8c" stroke-width="1"/><circle cx="687.5" cy="883.8" r="3.8" fill="#008b8b"/><circle cx="687.5" cy="905.4" r="7.6" fill="#c4c4c4" stroke="#7b2a8c" stroke-width="1"/><circle cx="687.5" cy="905.4" r="3.8" fill="#008b8b"/><circle cx="687.5" cy="926.5" r="7.6" fill="#c4c4c4" stroke="#7b2a8c" stroke-width="1"/><circle cx="687.5" cy="926.5" r="3.8" fill="#008b8b"/><circle cx="687.5" cy="947.5" r="7.6" fill="#c4c4c4" stroke="#7b2a8c" stroke-width="1"/><circle cx="687.5" cy="947.5" r="3.8" fill="#008b8b"/><rect x="679.5" y="961" width="16" height="16" fill="#c8c8c8" stroke="#7b2a8c" stroke-width="1"/><circle cx="687.5" cy="969" r="3.8" fill="#008b8b"/><rect x="735" y="800" width="52" height="191" fill="url(#hatch)" stroke="#ff00ff" stroke-width="1"/><path d="M735.5,800.5 H786.5 V990.5 H735.5 V960 H743 V830 H735.5 Z" fill="none" stroke="#ffff00" stroke-width="3"/><rect x="751.7" y="801" width="6" height="6" fill="none" stroke="#ffff00" stroke-width="1.5"/><rect x="751.7" y="984" width="6" height="6" fill="none" stroke="#ffff00" stroke-width="1.5"/><circle cx="754.7" cy="820" r="7.6" fill="#c4c4c4" stroke="#7b2a8c" stroke-width="1"/><circle cx="754.7" cy="820" r="3.8" fill="#008b8b"/><circle cx="754.7" cy="841.7" r="7.6" fill="#c4c4c4" stroke="#7b2a8c" stroke-width="1"/><circle cx="754.7" cy="841.7" r="3.8" fill="#008b8b"/><circle cx="754.7" cy="862.8" r="7.6" fill="#c4c4c4" stroke="#7b2a8c" stroke-width="1"/><circle cx="754.7" cy="862.8" r="3.8" fill="#008b8b"/><circle cx="754.7" cy="883.8" r="7.6" fill="#c4c4c4" stroke="#7b2a8c" stroke-width="1"/><circle cx="754.7" cy="883.8" r="3.8" fill="#008b8b"/><circle cx="754.7" cy="905.4" r="7.6" fill="#c4c4c4" stroke="#7b2a8c" stroke-width="1"/><circle cx="754.7" cy="905.4" r="3.8" fill="#008b8b"/><circle cx="754.7" cy="926.5" r="7.6" fill="#c4c4c4" stroke="#7b2a8c" stroke-width="1"/><circle cx="754.7" cy="926.5" r="3.8" fill="#008b8b"/><circle cx="754.7" cy="947.5" r="7.6" fill="#c4c4c4" stroke="#7b2a8c" stroke-width="1"/><circle cx="754.7" cy="947.5" r="3.8" fill="#008b8b"/><rect x="746.7" y="961" width="16" height="16" fill="#c8c8c8" stroke="#7b2a8c" stroke-width="1"/><circle cx="754.7" cy="969" r="3.8" fill="#008b8b"/><rect x="803" y="800" width="52" height="86" fill="url(#hatch)" stroke="#ff00ff" stroke-width="1"/><path d="M803.5,800.5 H854.5 V885.5 H803.5 V854 H811 V827 H803.5 Z" fill="none" stroke="#ffff00" stroke-width="3"/><rect x="818.8" y="801" width="6" height="6" fill="none" stroke="#ffff00" stroke-width="1.5"/><rect x="818.8" y="879" width="6" height="6" fill="none" stroke="#ffff00" stroke-width="1.5"/><circle cx="821.8" cy="820" r="7.6" fill="#c4c4c4" stroke="#7b2a8c" stroke-width="1"/><circle cx="821.8" cy="820" r="3.8" fill="#008b8b"/><circle cx="821.8" cy="841.7" r="7.6" fill="#c4c4c4" stroke="#7b2a8c" stroke-width="1"/><circle cx="821.8" cy="841.7" r="3.8" fill="#008b8b"/><rect x="813.8" y="854.8" width="16" height="16" fill="#c8c8c8" stroke="#7b2a8c" stroke-width="1"/><circle cx="821.8" cy="862.8" r="3.8" fill="#008b8b"/><text x="666" y="793" fill="#ffff00" stroke="#a74242" stroke-width="0.35" font-family="Liberation Sans" font-size="14" letter-spacing="0.2">P3</text><text x="733" y="793" fill="#ffff00" stroke="#a74242" stroke-width="0.35" font-family="Liberation Sans" font-size="14" letter-spacing="0.2">P2</text><text x="802" y="793" fill="#ffff00" stroke="#a74242" stroke-width="0.35" font-family="Liberation Sans" font-size="14" letter-spacing="0.2">P1</text><line x1="664" y1="381.5" x2="1400" y2="382.5" stroke="#a9b585" stroke-width="1" shape-rendering="crispEdges"/><line x1="1400" y1="382.5" x2="1559.2" y2="384" stroke="#a9b585" stroke-width="1" shape-rendering="crispEdges"/><line x1="664" y1="384" x2="1465.2" y2="384" stroke="#a9b585" stroke-width="1" shape-rendering="crispEdges"/><line x1="664" y1="394" x2="1053.5" y2="398" stroke="#a9b585" stroke-width="1" shape-rendering="crispEdges"/><line x1="1053.5" y1="398" x2="1240" y2="392" stroke="#a9b585" stroke-width="1" shape-rendering="crispEdges"/><line x1="1240" y1="392" x2="1332" y2="390" stroke="#a9b585" stroke-width="1" shape-rendering="crispEdges"/><line x1="664" y1="396.5" x2="1147.5" y2="398" stroke="#a9b585" stroke-width="1" shape-rendering="crispEdges"/><line x1="1147.5" y1="398" x2="1237.5" y2="398" stroke="#a9b585" stroke-width="1" shape-rendering="crispEdges"/><line x1="1237.5" y1="398" x2="1332" y2="398" stroke="#a9b585" stroke-width="1" shape-rendering="crispEdges"/><line x1="1147.5" y1="381" x2="1147.5" y2="398" stroke="#a9b585" stroke-width="1" shape-rendering="crispEdges"/><line x1="1053.5" y1="381" x2="1147.5" y2="381" stroke="#a9b585" stroke-width="1" shape-rendering="crispEdges"/><line x1="1332" y1="381" x2="1425.3" y2="456.5" stroke="#a9b585" stroke-width="1" shape-rendering="crispEdges"/><line x1="1425.3" y1="456.5" x2="1559.2" y2="456.5" stroke="#a9b585" stroke-width="1" shape-rendering="crispEdges"/><line x1="1613.5" y1="398" x2="1704.5" y2="381" stroke="#a9b585" stroke-width="1" shape-rendering="crispEdges"/><line x1="1425.3" y1="384" x2="1425.3" y2="456.5" stroke="#a9b585" stroke-width="1" shape-rendering="crispEdges"/><line x1="1559.2" y1="384" x2="1559.2" y2="456.5" stroke="#a9b585" stroke-width="1" shape-rendering="crispEdges"/><line x1="664" y1="524.5" x2="1400" y2="525.5" stroke="#a9b585" stroke-width="1" shape-rendering="crispEdges"/><line x1="1400" y1="525.5" x2="1559.2" y2="527" stroke="#a9b585" stroke-width="1" shape-rendering="crispEdges"/><line x1="664" y1="527" x2="1465.2" y2="527" stroke="#a9b585" stroke-width="1" shape-rendering="crispEdges"/><line x1="664" y1="537" x2="1053.5" y2="541" stroke="#a9b585" stroke-width="1" shape-rendering="crispEdges"/><line x1="1053.5" y1="541" x2="1240" y2="535" stroke="#a9b585" stroke-width="1" shape-rendering="crispEdges"/><line x1="1240" y1="535" x2="1332" y2="533" stroke="#a9b585" stroke-width="1" shape-rendering="crispEdges"/><line x1="664" y1="539.5" x2="1147.5" y2="541" stroke="#a9b585" stroke-width="1" shape-rendering="crispEdges"/><line x1="1147.5" y1="541" x2="1237.5" y2="541" stroke="#a9b585" stroke-width="1" shape-rendering="crispEdges"/><line x1="1237.5" y1="541" x2="1332" y2="541" stroke="#a9b585" stroke-width="1" shape-rendering="crispEdges"/><line x1="1147.5" y1="524" x2="1147.5" y2="541" stroke="#a9b585" stroke-width="1" shape-rendering="crispEdges"/><line x1="1053.5" y1="524" x2="1147.5" y2="524" stroke="#a9b585" stroke-width="1" shape-rendering="crispEdges"/><line x1="1332" y1="524" x2="1425.3" y2="599.5" stroke="#a9b585" stroke-width="1" shape-rendering="crispEdges"/><line x1="1425.3" y1="599.5" x2="1559.2" y2="599.5" stroke="#a9b585" stroke-width="1" shape-rendering="crispEdges"/><line x1="1613.5" y1="541" x2="1704.5" y2="524" stroke="#a9b585" stroke-width="1" shape-rendering="crispEdges"/><line x1="1425.3" y1="527" x2="1425.3" y2="599.5" stroke="#a9b585" stroke-width="1" shape-rendering="crispEdges"/><line x1="1559.2" y1="527" x2="1559.2" y2="599.5" stroke="#a9b585" stroke-width="1" shape-rendering="crispEdges"/><line x1="664" y1="667.5" x2="1400" y2="668.5" stroke="#a9b585" stroke-width="1" shape-rendering="crispEdges"/><line x1="1400" y1="668.5" x2="1559.2" y2="670" stroke="#a9b585" stroke-width="1" shape-rendering="crispEdges"/><line x1="664" y1="670" x2="1465.2" y2="670" stroke="#a9b585" stroke-width="1" shape-rendering="crispEdges"/><line x1="664" y1="680" x2="1053.5" y2="684" stroke="#a9b585" stroke-width="1" shape-rendering="crispEdges"/><line x1="1053.5" y1="684" x2="1240" y2="678" stroke="#a9b585" stroke-width="1" shape-rendering="crispEdges"/><line x1="1240" y1="678" x2="1332" y2="676" stroke="#a9b585" stroke-width="1" shape-rendering="crispEdges"/><line x1="664" y1="682.5" x2="1147.5" y2="684" stroke="#a9b585" stroke-width="1" shape-rendering="crispEdges"/><line x1="1147.5" y1="684" x2="1237.5" y2="684" stroke="#a9b585" stroke-width="1" shape-rendering="crispEdges"/><line x1="1237.5" y1="684" x2="1332" y2="684" stroke="#a9b585" stroke-width="1" shape-rendering="crispEdges"/><line x1="1147.5" y1="667" x2="1147.5" y2="684" stroke="#a9b585" stroke-width="1" shape-rendering="crispEdges"/><line x1="1053.5" y1="667" x2="1147.5" y2="667" stroke="#a9b585" stroke-width="1" shape-rendering="crispEdges"/><line x1="1332" y1="667" x2="1425.3" y2="742.5" stroke="#a9b585" stroke-width="1" shape-rendering="crispEdges"/><line x1="1425.3" y1="742.5" x2="1559.2" y2="742.5" stroke="#a9b585" stroke-width="1" shape-rendering="crispEdges"/><line x1="1613.5" y1="684" x2="1704.5" y2="667" stroke="#a9b585" stroke-width="1" shape-rendering="crispEdges"/><line x1="1425.3" y1="670" x2="1425.3" y2="742.5" stroke="#a9b585" stroke-width="1" shape-rendering="crispEdges"/><line x1="1559.2" y1="670" x2="1559.2" y2="742.5" stroke="#a9b585" stroke-width="1" shape-rendering="crispEdges"/><line x1="1053.5" y1="398" x2="1053.5" y2="541" stroke="#a9b585" stroke-width="1" shape-rendering="crispEdges"/><line x1="1053.5" y1="541" x2="1053.5" y2="684" stroke="#a9b585" stroke-width="1" shape-rendering="crispEdges"/><line x1="1237.5" y1="398" x2="1237.5" y2="541" stroke="#a9b585" stroke-width="1" shape-rendering="crispEdges"/><line x1="1237.5" y1="541" x2="1237.5" y2="684" stroke="#a9b585" stroke-width="1" shape-rendering="crispEdges"/><line x1="1332" y1="398" x2="1332" y2="541" stroke="#a9b585" stroke-width="1" shape-rendering="crispEdges"/><line x1="1332" y1="541" x2="1332" y2="684" stroke="#a9b585" stroke-width="1" shape-rendering="crispEdges"/><line x1="1425.3" y1="456.5" x2="1425.3" y2="599.5" stroke="#a9b585" stroke-width="1" shape-rendering="crispEdges"/><line x1="1425.3" y1="599.5" x2="1425.3" y2="742.5" stroke="#a9b585" stroke-width="1" shape-rendering="crispEdges"/><line x1="1559.2" y1="456.5" x2="1559.2" y2="599.5" stroke="#a9b585" stroke-width="1" shape-rendering="crispEdges"/><line x1="1559.2" y1="599.5" x2="1559.2" y2="742.5" stroke="#a9b585" stroke-width="1" shape-rendering="crispEdges"/><line x1="1613.5" y1="398" x2="1613.5" y2="541" stroke="#a9b585" stroke-width="1" shape-rendering="crispEdges"/><line x1="1613.5" y1="541" x2="1613.5" y2="684" stroke="#a9b585" stroke-width="1" shape-rendering="crispEdges"/><line x1="743" y1="252" x2="775" y2="253" stroke="#a9b585" stroke-width="1" shape-rendering="crispEdges"/><line x1="775" y1="253" x2="795" y2="255" stroke="#a9b585" stroke-width="1" shape-rendering="crispEdges"/><line x1="743" y1="252" x2="743" y2="300" stroke="#a9b585" stroke-width="1" shape-rendering="crispEdges"/><line x1="760" y1="252" x2="760" y2="272" stroke="#a9b585" stroke-width="1" shape-rendering="crispEdges"/><line x1="760" y1="272" x2="795" y2="268" stroke="#a9b585" stroke-width="1" shape-rendering="crispEdges"/><line x1="743" y1="300" x2="760" y2="265" stroke="#a9b585" stroke-width="1" shape-rendering="crispEdges"/><line x1="839" y1="231" x2="787" y2="254" stroke="#a9b585" stroke-width="1" shape-rendering="crispEdges"/><line x1="787" y1="254" x2="765" y2="263" stroke="#a9b585" stroke-width="1" shape-rendering="crispEdges"/><line x1="765" y1="263" x2="744" y2="272" stroke="#a9b585" stroke-width="1" shape-rendering="crispEdges"/><line x1="839" y1="231" x2="1045" y2="231" stroke="#a9b585" stroke-width="1" shape-rendering="crispEdges"/><line x1="856" y1="231" x2="867" y2="255" stroke="#a9b585" stroke-width="1" shape-rendering="crispEdges"/><line x1="867" y1="255" x2="880" y2="270" stroke="#a9b585" stroke-width="1" shape-rendering="crispEdges"/><line x1="794" y1="282" x2="898" y2="239" stroke="#a9b585" stroke-width="1" shape-rendering="crispEdges"/><line x1="898" y1="239" x2="918" y2="236" stroke="#a9b585" stroke-width="1" shape-rendering="crispEdges"/><line x1="868" y1="256" x2="917" y2="252" stroke="#a9b585" stroke-width="1" shape-rendering="crispEdges"/><line x1="860" y1="296" x2="867" y2="268" stroke="#a9b585" stroke-width="1" shape-rendering="crispEdges"/><line x1="868" y1="281" x2="900" y2="273" stroke="#a9b585" stroke-width="1" shape-rendering="crispEdges"/><line x1="900" y1="273" x2="900" y2="252" stroke="#a9b585" stroke-width="1" shape-rendering="crispEdges"/><line x1="907" y1="240" x2="995" y2="256" stroke="#a9b585" stroke-width="1" shape-rendering="crispEdges"/><line x1="1040" y1="246" x2="1105" y2="327" stroke="#a9b585" stroke-width="1" shape-rendering="crispEdges"/><line x1="862" y1="300" x2="990" y2="296" stroke="#a9b585" stroke-width="1" shape-rendering="crispEdges"/><line x1="996" y1="255" x2="1069" y2="255" stroke="#a9b585" stroke-width="1" shape-rendering="crispEdges"/><line x1="996" y1="255" x2="996" y2="268" stroke="#a9b585" stroke-width="1" shape-rendering="crispEdges"/><line x1="1069" y1="269" x2="1069" y2="282" stroke="#a9b585" stroke-width="1" shape-rendering="crispEdges"/><line x1="1069" y1="282" x2="1020" y2="284.5" stroke="#a9b585" stroke-width="1" shape-rendering="crispEdges"/><line x1="1020" y1="284.5" x2="990" y2="286" stroke="#a9b585" stroke-width="1" shape-rendering="crispEdges"/><line x1="995" y1="282" x2="985" y2="300" stroke="#a9b585" stroke-width="1" shape-rendering="crispEdges"/><line x1="1041" y1="232" x2="1069" y2="260" stroke="#a9b585" stroke-width="1" shape-rendering="crispEdges"/><line x1="918" y1="262" x2="1045" y2="246" stroke="#a9b585" stroke-width="1" shape-rendering="crispEdges"/><line x1="883" y1="265" x2="1041" y2="248" stroke="#a9b585" stroke-width="1" shape-rendering="crispEdges"/><line x1="1057" y1="231" x2="1147.5" y2="398" stroke="#a9b585" stroke-width="1" shape-rendering="crispEdges"/><line x1="1069" y1="294.7" x2="930" y2="520" stroke="#a9b585" stroke-width="1" shape-rendering="crispEdges"/><line x1="687.5" y1="820" x2="730" y2="380" stroke="#a9b585" stroke-width="1" shape-rendering="crispEdges"/><line x1="687.5" y1="841.7" x2="770.5" y2="541" stroke="#a9b585" stroke-width="1" shape-rendering="crispEdges"/><line x1="687.5" y1="883.8" x2="866.5" y2="398" stroke="#a9b585" stroke-width="1" shape-rendering="crispEdges"/><line x1="687.5" y1="947.5" x2="866.5" y2="541" stroke="#a9b585" stroke-width="1" shape-rendering="crispEdges"/><line x1="821.8" y1="841.7" x2="770.5" y2="684" stroke="#a9b585" stroke-width="1" shape-rendering="crispEdges"/><line x1="754.7" y1="820" x2="866.5" y2="684" stroke="#a9b585" stroke-width="1" shape-rendering="crispEdges"/><line x1="754.7" y1="820" x2="959.5" y2="398" stroke="#a9b585" stroke-width="1" shape-rendering="crispEdges"/><line x1="754.7" y1="862.8" x2="959.5" y2="541" stroke="#a9b585" stroke-width="1" shape-rendering="crispEdges"/><line x1="821.8" y1="820" x2="959.5" y2="684" stroke="#a9b585" stroke-width="1" shape-rendering="crispEdges"/><line x1="754.7" y1="820" x2="1053.5" y2="684" stroke="#a9b585" stroke-width="1" shape-rendering="crispEdges"/><line x1="687.5" y1="905.4" x2="1451.8999999999999" y2="599.5" stroke="#a9b585" stroke-width="1" shape-rendering="crispEdges"/><line x1="754.7" y1="883.8" x2="1519.3" y2="599.5" stroke="#a9b585" stroke-width="1" shape-rendering="crispEdges"/><line x1="754.7" y1="883.8" x2="1465.2" y2="384" stroke="#a9b585" stroke-width="1" shape-rendering="crispEdges"/><line x1="754.7" y1="841.7" x2="1613.5" y2="398" stroke="#a9b585" stroke-width="1" shape-rendering="crispEdges"/><line x1="821.8" y1="820" x2="1451.8999999999999" y2="456.5" stroke="#a9b585" stroke-width="1" shape-rendering="crispEdges"/><line x1="754.7" y1="969" x2="1465.2" y2="670" stroke="#a9b585" stroke-width="1" shape-rendering="crispEdges"/><line x1="754.7" y1="947.5" x2="1704.5" y2="684" stroke="#a9b585" stroke-width="1" shape-rendering="crispEdges"/><line x1="754.7" y1="926.5" x2="1451.8999999999999" y2="742.5" stroke="#a9b585" stroke-width="1" shape-rendering="crispEdges"/><line x1="754.7" y1="905.4" x2="1532.6" y2="599.5" stroke="#a9b585" stroke-width="1" shape-rendering="crispEdges"/><line x1="687.5" y1="969" x2="1425.3" y2="527" stroke="#a9b585" stroke-width="1" shape-rendering="crispEdges"/><line x1="821.8" y1="862.8" x2="1332" y2="541" stroke="#a9b585" stroke-width="1" shape-rendering="crispEdges"/><line x1="959" y1="540" x2="1451.8999999999999" y2="456.5" stroke="#a9b585" stroke-width="1" shape-rendering="crispEdges"/><rect x="883" y="257" width="13" height="13" fill="#ff0000"/><text x="889.5" y="268" text-anchor="middle" fill="#fff" font-family="Liberation Sans" font-size="11" font-weight="bold" letter-spacing="-0.4">FD</text><rect x="1214" y="398" width="13" height="13" fill="#ff0000"/><text x="1220.5" y="409" text-anchor="middle" fill="#fff" font-family="Liberation Sans" font-size="11" font-weight="bold" letter-spacing="-0.4">FC</text><rect x="1214" y="541" width="13" height="13" fill="#ff0000"/><text x="1220.5" y="552" text-anchor="middle" fill="#fff" font-family="Liberation Sans" font-size="11" font-weight="bold" letter-spacing="-0.4">FB</text><rect x="1214" y="684" width="13" height="13" fill="#ff0000"/><text x="1220.5" y="695" text-anchor="middle" fill="#fff" font-family="Liberation Sans" font-size="11" font-weight="bold" letter-spacing="-0.4">FA</text><rect x="749" y="875" width="24" height="13" fill="#ff0000"/><text x="761.0" y="886" text-anchor="middle" fill="#fff" font-family="Liberation Sans" font-size="11" font-weight="normal" letter-spacing="0">Main</text><line x1="331.5" y1="81" x2="331.5" y2="1006" stroke="#8a8686" stroke-width="1"/><line x1="357.5" y1="81" x2="357.5" y2="1006" stroke="#8a8686" stroke-width="1"/><line x1="384.5" y1="81" x2="384.5" y2="1006" stroke="#8a8686" stroke-width="1"/><line x1="410.5" y1="81" x2="410.5" y2="1006" stroke="#8a8686" stroke-width="1"/><line x1="437.5" y1="81" x2="437.5" y2="1006" stroke="#8a8686" stroke-width="1"/><line x1="463.5" y1="81" x2="463.5" y2="1006" stroke="#8a8686" stroke-width="1"/><line x1="490.5" y1="81" x2="490.5" y2="1006" stroke="#8a8686" stroke-width="1"/><line x1="516.5" y1="81" x2="516.5" y2="1006" stroke="#8a8686" stroke-width="1"/><line x1="543.5" y1="81" x2="543.5" y2="1006" stroke="#8a8686" stroke-width="1"/><line x1="569.5" y1="81" x2="569.5" y2="1006" stroke="#8a8686" stroke-width="1"/><line x1="596.5" y1="81" x2="596.5" y2="1006" stroke="#8a8686" stroke-width="1"/><line x1="622.5" y1="81" x2="622.5" y2="1006" stroke="#8a8686" stroke-width="1"/><line x1="649.5" y1="81" x2="649.5" y2="1006" stroke="#8a8686" stroke-width="1"/><line x1="675.5" y1="81" x2="675.5" y2="1006" stroke="#8a8686" stroke-width="1"/><line x1="310" y1="85.5" x2="676" y2="85.5" stroke="#8a8686" stroke-width="1"/><line x1="310" y1="111.5" x2="676" y2="111.5" stroke="#8a8686" stroke-width="1"/><line x1="310" y1="138.5" x2="676" y2="138.5" stroke="#8a8686" stroke-width="1"/><line x1="310" y1="164.5" x2="676" y2="164.5" stroke="#8a8686" stroke-width="1"/><line x1="310" y1="191.5" x2="676" y2="191.5" stroke="#8a8686" stroke-width="1"/><line x1="310" y1="217.5" x2="676" y2="217.5" stroke="#8a8686" stroke-width="1"/><line x1="310" y1="244.5" x2="676" y2="244.5" stroke="#8a8686" stroke-width="1"/><line x1="310" y1="270.5" x2="676" y2="270.5" stroke="#8a8686" stroke-width="1"/><line x1="310" y1="297.5" x2="676" y2="297.5" stroke="#8a8686" stroke-width="1"/><line x1="310" y1="323.5" x2="676" y2="323.5" stroke="#8a8686" stroke-width="1"/><line x1="310" y1="350.5" x2="676" y2="350.5" stroke="#8a8686" stroke-width="1"/><line x1="310" y1="376.5" x2="676" y2="376.5" stroke="#8a8686" stroke-width="1"/><line x1="310" y1="403.5" x2="676" y2="403.5" stroke="#8a8686" stroke-width="1"/><line x1="310" y1="429.5" x2="676" y2="429.5" stroke="#8a8686" stroke-width="1"/><line x1="310" y1="456.5" x2="676" y2="456.5" stroke="#8a8686" stroke-width="1"/><line x1="310" y1="482.5" x2="676" y2="482.5" stroke="#8a8686" stroke-width="1"/><line x1="310" y1="509.5" x2="676" y2="509.5" stroke="#8a8686" stroke-width="1"/><line x1="310" y1="535.5" x2="676" y2="535.5" stroke="#8a8686" stroke-width="1"/><line x1="310" y1="562.5" x2="676" y2="562.5" stroke="#8a8686" stroke-width="1"/><line x1="310" y1="588.5" x2="676" y2="588.5" stroke="#8a8686" stroke-width="1"/><line x1="310" y1="615.5" x2="676" y2="615.5" stroke="#8a8686" stroke-width="1"/><line x1="310" y1="641.5" x2="676" y2="641.5" stroke="#8a8686" stroke-width="1"/><line x1="310" y1="668.5" x2="676" y2="668.5" stroke="#8a8686" stroke-width="1"/><line x1="310" y1="694.5" x2="676" y2="694.5" stroke="#8a8686" stroke-width="1"/><line x1="310" y1="721.5" x2="676" y2="721.5" stroke="#8a8686" stroke-width="1"/><line x1="310" y1="747.5" x2="676" y2="747.5" stroke="#8a8686" stroke-width="1"/><line x1="310" y1="774.5" x2="676" y2="774.5" stroke="#8a8686" stroke-width="1"/><line x1="310" y1="800.5" x2="676" y2="800.5" stroke="#8a8686" stroke-width="1"/><line x1="310" y1="827.5" x2="676" y2="827.5" stroke="#8a8686" stroke-width="1"/><line x1="310" y1="853.5" x2="676" y2="853.5" stroke="#8a8686" stroke-width="1"/><line x1="310" y1="880.5" x2="676" y2="880.5" stroke="#8a8686" stroke-width="1"/><line x1="310" y1="906.5" x2="676" y2="906.5" stroke="#8a8686" stroke-width="1"/><line x1="310" y1="933.5" x2="676" y2="933.5" stroke="#8a8686" stroke-width="1"/><line x1="310" y1="959.5" x2="676" y2="959.5" stroke="#8a8686" stroke-width="1"/><line x1="310" y1="986.5" x2="676" y2="986.5" stroke="#8a8686" stroke-width="1"/><line x1="652.5" y1="80" x2="652.5" y2="1006" stroke="#ffffff" stroke-width="1.2" stroke-dasharray="4,3"/></svg>
<svg width="0" height="0" style="position:absolute"><defs><linearGradient id="bg1" x1="0" y1="0" x2="0" y2="1"><stop offset="0" stop-color="#d4e6f6"/><stop offset="1" stop-color="#86aed4"/></linearGradient></defs></svg>
<div class="menu" style="left:274px;top:21px;width:315px;height:471px"><div class="gut" style="width:28px"></div><div class="mi" style="top:0px"><div class="l" style="left:36px;top:7px"><u>U</u>pdate Schematics in Multi-channel.PrjPcb</div></div><div class="mi" style="top:26px"><div class="l" style="left:36px;top:7px"><u>I</u>mport Changes From Multi-channel.PrjPcb</div></div><div class="sep" style="left:36px;right:0;top:55px"></div><div class="mi" style="top:57px"><div class="l" style="left:36px;top:7px"><u>R</u>ules...</div></div><div class="mi" style="top:83px"><div class="l" style="left:36px;top:7px">Rule <u>W</u>izard...</div></div><div class="sep" style="left:36px;right:0;top:112px"></div><div class="mi" style="top:114px"><div class="l" style="left:36px;top:7px">Board <u>S</u>hape</div></div><div class="arr" style="left:300px;top:123px"></div><div class="sep" style="left:36px;right:0;top:143px"></div><div class="mi" style="top:145px"><div class="l" style="left:36px;top:7px"><u>N</u>etlist</div></div><div class="arr" style="left:300px;top:154px"></div><div class="mi" style="top:171px"><div class="l" style="left:36px;top:7px"><u>x</u>Signals</div></div><div class="arr" style="left:300px;top:180px"></div><div class="mi" style="top:197px"><div class="l" style="left:36px;top:7px">Layer Stac<u>k</u> Manager...</div></div><div class="mi" style="top:223px"><div class="l" style="left:36px;top:7px">Board La<u>y</u>ers &amp; Colors...</div></div><div class="t" style="left:277px;top:230px">L</div><div class="mi" style="top:249px"><div class="l" style="left:36px;top:7px">Manage Layer Se<u>t</u>s</div></div><div class="arr" style="left:300px;top:258px"></div><div class="hl" style="left:1px;right:1px;top:275px;height:26px"></div><div class="mi" style="top:275px"><div class="l" style="left:36px;top:7px">Roo<u>m</u>s</div></div><div class="arr" style="left:300px;top:284px"></div><div class="mi" style="top:301px"><div class="l" style="left:36px;top:7px"><u>C</u>lasses...</div></div><div class="sep" style="left:36px;right:0;top:330px"></div><div class="mi" style="top:332px"><div class="l" style="left:36px;top:7px"><u>B</u>rowse Components...</div></div><svg class="a" style="left:5px;top:338px" width="17" height="16" viewBox="0 0 17 16"><rect x="0.5" y="1.5" width="4" height="13" fill="#8fb4dc" stroke="#4a6a9a"/><rect x="4.5" y="1.5" width="5" height="13" fill="#b8d0ea" stroke="#4a6a9a"/><circle cx="10" cy="9" r="3.6" fill="#fff" stroke="#707070" stroke-width="1.4"/><path d="M12.5,11.5 L15.5,14.5" stroke="#d08a30" stroke-width="2.2"/></svg><div class="mi" style="top:358px"><div class="l" style="left:36px;top:7px">A<u>d</u>d/Remove Library...</div></div><svg class="a" style="left:6px;top:365px" width="13" height="16" viewBox="0 0 13 16"><rect x="0.5" y="0.5" width="6" height="14" fill="#8fb4dc" stroke="#4a6a9a"/><path d="M2,3 H5 M2,5 H5" stroke="#fff" stroke-width="0.8"/><rect x="6.5" y="0.5" width="6" height="14" fill="#efb060" stroke="#a06a20"/><path d="M8,3 H11" stroke="#fff3d0" stroke-width="0.8"/></svg><div class="mi" style="top:384px"><div class="l" style="left:36px;top:7px">Make <u>P</u>CB Library</div></div><div class="mi" style="top:410px"><div class="l" style="left:36px;top:7px">M<u>a</u>ke Integrated Library</div></div><div class="sep" style="left:36px;right:0;top:439px"></div><div class="mi" style="top:441px"><div class="l" style="left:36px;top:7px">Board <u>O</u>ptions...</div></div></div>
<div class="menu" style="left:589px;top:297px;width:404px;height:387px"><div class="gut" style="width:27px"></div><div class="mi" style="top:0px"><div class="l" style="left:35px;top:6px">Place Rectangular <u>R</u>oom</div></div><svg class="a" style="left:4px;top:5px" width="16" height="16" viewBox="0 0 16 16"><rect x="0.5" y="0.5" width="15" height="14" fill="url(#bg1)" stroke="#2c4466" stroke-width="1"/><path d="M4,1 V15 M8,1 V15 M12,1 V15 M1,5 H15 M1,9 H15 M1,12 H15" stroke="#ffffff" stroke-opacity="0.35" stroke-width="0.6"/></svg><div class="mi" style="top:26px"><div class="l" style="left:35px;top:6px">Place Polygonal Roo<u>m</u></div></div><svg class="a" style="left:4px;top:31px" width="16" height="16" viewBox="0 0 16 16"><path d="M0.5,14.5 V10 H5 V6 H9 V1 H15.5 V14.5 Z" fill="url(#bg1)" stroke="#2c4466" stroke-width="1"/></svg><div class="mi" style="top:52px"><div class="l" style="left:35px;top:6px">Mo<u>v</u>e Room</div></div><div class="mi" style="top:78px"><div class="l" style="left:35px;top:6px"><u>E</u>dit Polygonal Room Vertices</div></div><div class="sep" style="left:35px;right:0;top:106px"></div><div class="hl" style="left:1px;right:1px;top:109px;height:26px"></div><div class="mi" style="top:109px"><div class="l" style="left:35px;top:6px"><u>C</u>opy Room Formats</div></div><svg class="a" style="left:4px;top:114px" width="16" height="16" viewBox="0 0 16 16"><rect x="5.5" y="0.5" width="10" height="10" fill="url(#bg1)" stroke="#2c4466" stroke-width="1"/><rect x="0.5" y="5.5" width="10" height="10" fill="url(#bg1)" stroke="#2c4466" stroke-width="1"/></svg><div class="mi" style="top:135px"><div class="l" style="left:35px;top:6px"><u>A</u>rrange Rooms</div></div><div class="mi" style="top:161px"><div class="l" style="left:35px;top:6px">Move Rooms To Gri<u>d</u></div></div><svg class="a" style="left:4px;top:166px" width="16" height="16" viewBox="0 0 16 16"><path d="M0,4.5 H16 M0,11.5 H16 M4.5,0 V16 M11.5,0 V16" stroke="#8ec0f4" stroke-width="1"/><rect x="4.5" y="4.5" width="7" height="7" fill="url(#bg1)" stroke="#2c4466" stroke-width="1" stroke-width="1.4"/></svg><div class="sep" style="left:35px;right:0;top:189px"></div><div class="mi" style="top:192px"><div class="l" style="left:35px;top:6px">Wrap Non-Ortho<u>g</u>onal Room Around Components</div></div><svg class="a" style="left:4px;top:197px" width="16" height="16" viewBox="0 0 16 16"><path d="M0.5,15.5 V8 L6.5,1.5 H15.5 V5.5 H12 V10 H15.5 V15.5 Z" fill="url(#bg1)" stroke="#2c4466" stroke-width="1"/><rect x="7.5" y="3.5" width="2.5" height="6" fill="#f5c030" stroke="#c08a10" stroke-width="0.6"/><rect x="2.5" y="10.5" width="8" height="3" fill="#f5c030" stroke="#c08a10" stroke-width="0.6"/></svg><div class="mi" style="top:218px"><div class="l" style="left:35px;top:6px"><u>W</u>rap Orthogonal Room Around Components</div></div><svg class="a" style="left:4px;top:223px" width="16" height="16" viewBox="0 0 16 16"><path d="M0.5,0.5 H11.5 V8.5 H15.5 V15.5 H5.5 V10.5 H0.5 Z" fill="url(#bg1)" stroke="#2c4466" stroke-width="1"/><rect x="2.5" y="3" width="6" height="3" fill="#f5c030" stroke="#c08a10" stroke-width="0.6"/><rect x="8" y="11" width="5.5" height="2.8" fill="#f5c030" stroke="#c08a10" stroke-width="0.6"/></svg><div class="mi" style="top:244px"><div class="l" style="left:35px;top:6px">Wra<u>p</u> Rectangular Room Around Components</div></div><svg class="a" style="left:4px;top:249px" width="16" height="16" viewBox="0 0 16 16"><rect x="0.5" y="0.5" width="15" height="15" fill="url(#bg1)" stroke="#2c4466" stroke-width="1"/><rect x="3" y="3" width="5" height="3" fill="#f5c030" stroke="#c08a10" stroke-width="0.6"/><rect x="6" y="9" width="6.5" height="3" fill="#f5c030" stroke="#c08a10" stroke-width="0.6"/></svg><div class="sep" style="left:35px;right:0;top:272px"></div><div class="mi" style="top:275px"><div class="l" style="left:35px;top:6px">Create <u>N</u>on-Orthogonal Room from selected components</div></div><svg class="a" style="left:4px;top:280px" width="16" height="16" viewBox="0 0 16 16"><path d="M0.5,15.5 V8 L6.5,1.5 H15.5 V5.5 H12 V10 H15.5 V15.5 Z" fill="url(#bg1)" stroke="#2c4466" stroke-width="1"/><rect x="7.5" y="3.5" width="2.5" height="6" fill="#f5c030" stroke="#c08a10" stroke-width="0.6"/><rect x="2.5" y="10.5" width="8" height="3" fill="#f5c030" stroke="#c08a10" stroke-width="0.6"/></svg><div class="mi" style="top:301px"><div class="l" style="left:35px;top:6px">Create <u>O</u>rthogonal Room from selected components</div></div><svg class="a" style="left:4px;top:306px" width="16" height="16" viewBox="0 0 16 16"><path d="M0.5,0.5 H11.5 V8.5 H15.5 V15.5 H5.5 V10.5 H0.5 Z" fill="url(#bg1)" stroke="#2c4466" stroke-width="1"/><rect x="2.5" y="3" width="6" height="3" fill="#f5c030" stroke="#c08a10" stroke-width="0.6"/><rect x="8" y="11" width="5.5" height="2.8" fill="#f5c030" stroke="#c08a10" stroke-width="0.6"/></svg><div class="mi" style="top:327px"><div class="l" style="left:35px;top:6px">Create Rec<u>t</u>angle Room from selected components</div></div><svg class="a" style="left:4px;top:332px" width="16" height="16" viewBox="0 0 16 16"><rect x="0.5" y="0.5" width="15" height="15" fill="url(#bg1)" stroke="#2c4466" stroke-width="1"/><rect x="3" y="3" width="5" height="3" fill="#f5c030" stroke="#c08a10" stroke-width="0.6"/><rect x="6" y="9" width="6.5" height="3" fill="#f5c030" stroke="#c08a10" stroke-width="0.6"/></svg><div class="sep" style="left:35px;right:0;top:355px"></div><div class="mi" style="top:358px"><div class="l" style="left:35px;top:6px"><u>S</u>lice Room</div></div><svg class="a" style="left:4px;top:363px" width="16" height="16" viewBox="0 0 16 16"><path d="M0.5,9.5 H10.5 V0.5 H15.5 V15.5 H0.5 Z" fill="url(#bg1)" stroke="#2c4466" stroke-width="1"/><rect x="0.5" y="0.5" width="8" height="7" fill="url(#bg1)" stroke="#2c4466" stroke-width="1"/></svg></div>
<div class="a" style="left:281px;top:3px;width:48px;height:17px;background:#f0f0f0;border:1px solid #fff"></div>
<div class="t" style="left:282px;top:3px"><u>D</u>esign</div>
<div class="redbox" style="left:276px;top:-1px;width:57px;height:25px"></div>
<div class="redbox" style="left:284px;top:301px;width:137px;height:23px"></div>
<div class="redbox" style="left:590px;top:406px;width:176px;height:29px"></div>
</body></html>
